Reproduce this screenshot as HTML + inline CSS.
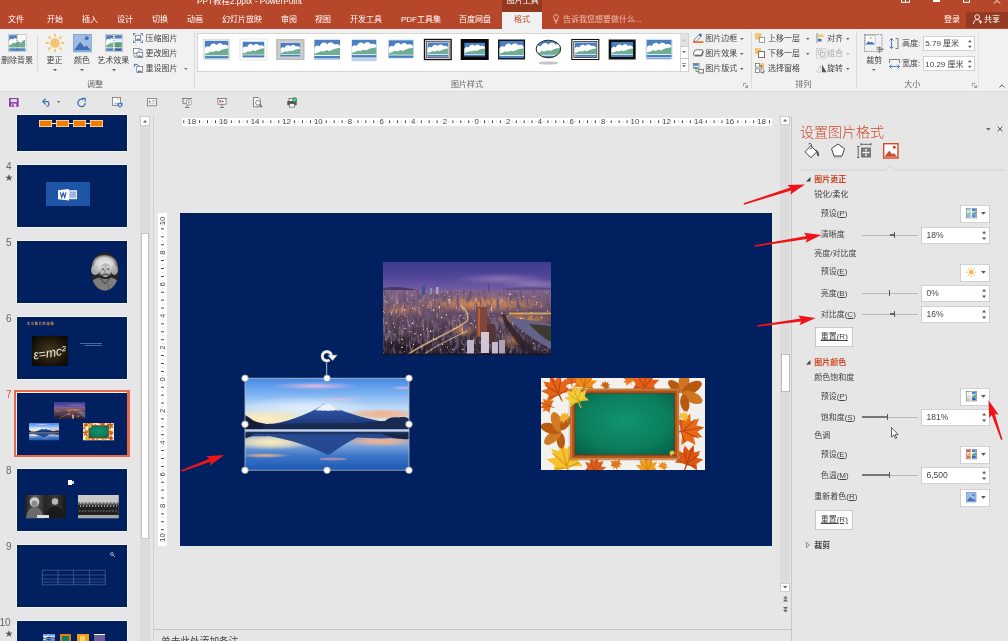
<!DOCTYPE html><html lang="zh-CN"><head><meta charset="utf-8"><title>PPT教程2.pptx - PowerPoint</title><style>
html,body{margin:0;padding:0;}
body{width:1008px;height:641px;overflow:hidden;position:relative;background:#e6e6e6;
 font-family:"Liberation Sans","Noto Sans CJK SC",sans-serif;font-size:8px;color:#444;}
.a{position:absolute;white-space:nowrap;line-height:1;}
.t{position:absolute;white-space:nowrap;line-height:10px;height:10px;font-size:8px;color:#444;}
.w{color:#fff;}
svg{position:absolute;overflow:visible;}
</style></head><body><div id="app" style="position:absolute;left:0;top:0;width:1008px;height:641px;overflow:hidden;will-change:transform;">
<svg width="0" height="0" style="left:0;top:0"><defs>
<symbol id="pic" viewBox="0 0 26 18" preserveAspectRatio="none">
<rect width="26" height="18" fill="#4a7fc1"/>
<path d="M0 15V8c1.500-2.500 4-3 5.500-1.500 1-3.800 5.500-4.800 7.500-1.800 1.500-2.500 5.500-2.500 7 0 2-1 4.500-.5 6 1.500v8.800z" fill="#fff"/>
<path d="M0 15.500v-2.300c2.500-.2 4.500-1 6.500-2.300 1.500.8 3.500.6 5-.4 1.500-.6 2.500-.2 3.500.6 3-2 7-3 11-3.400v8z" fill="#6fae93"/>
<rect y="14.800" width="26" height="1" fill="#fff"/><rect y="15.800" width="26" height="2.200" fill="#4a7fc1"/>
</symbol>
</defs></svg>
<svg width="0" height="0" style="left:0;top:0"><defs><symbol id="city" viewBox="0 0 168 93" preserveAspectRatio="none">
<defs>
<linearGradient id="csky" x1="0" y1="0" x2="0" y2="1"><stop offset="0" stop-color="#3c3c8e"/><stop offset=".5" stop-color="#54489a"/><stop offset="1" stop-color="#7d64a6"/></linearGradient>
<linearGradient id="cgnd" x1="0" y1="0" x2="0" y2="1"><stop offset="0" stop-color="#86668f"/><stop offset=".2" stop-color="#74566f"/><stop offset=".6" stop-color="#4c3a4c"/><stop offset="1" stop-color="#2a1f2a"/></linearGradient>
<radialGradient id="cglow" cx=".5" cy=".5" r=".5"><stop offset="0" stop-color="#f09648" stop-opacity=".85"/><stop offset="1" stop-color="#f09a48" stop-opacity="0"/></radialGradient>
<radialGradient id="chaze" cx=".5" cy=".5" r=".5"><stop offset="0" stop-color="#a283bc" stop-opacity=".7"/><stop offset="1" stop-color="#a283bc" stop-opacity="0"/></radialGradient><radialGradient id="cdark" cx=".5" cy=".5" r=".5"><stop offset="0" stop-color="#1c1520" stop-opacity=".8"/><stop offset="1" stop-color="#1c1520" stop-opacity="0"/></radialGradient>
<filter id="cn1" x="0" y="0" width="1" height="1"><feTurbulence type="fractalNoise" baseFrequency=".38" numOctaves="2" seed="4"/><feColorMatrix values="0 0 0 0 1  0 0 0 0 .74  0 0 0 0 .46  6 0 0 0 -4.050"/></filter>
<filter id="cn2" x="0" y="0" width="1" height="1"><feTurbulence type="fractalNoise" baseFrequency=".3 .1" numOctaves="2" seed="11"/><feColorMatrix values="0 0 0 0 .13  0 0 0 0 .09  0 0 0 0 .17  0 4 0 0 -1.900"/></filter>
<filter id="cn3" x="0" y="0" width="1" height="1"><feTurbulence type="fractalNoise" baseFrequency=".32 .09" numOctaves="2" seed="7"/><feColorMatrix values="0 0 0 0 .7  0 0 0 0 .5  0 0 0 0 .6  0 0 4.500 0 -2.450"/></filter>
<clipPath id="cclip"><rect width="168" height="93"/></clipPath>
</defs>
<g clip-path="url(#cclip)">
<rect width="168" height="32" fill="url(#csky)"/>
<ellipse cx="118" cy="17" rx="48" ry="6" fill="url(#chaze)"/><ellipse cx="150" cy="22" rx="34" ry="5" fill="url(#chaze)"/>
<path d="M0 26c10-2 22-1 34 2v4H0z" fill="#463a6c"/><path d="M120 27c15-2 30-2 48-1v6h-48z" fill="#5f4d88"/>
<rect y="28" width="168" height="65" fill="url(#cgnd)"/>
<ellipse cx="100" cy="42" rx="70" ry="9" fill="url(#cglow)"/><ellipse cx="18" cy="48" rx="26" ry="7" fill="url(#cglow)" opacity=".55"/><ellipse cx="142" cy="57" rx="30" ry="6" fill="url(#cglow)"/>
<ellipse cx="80" cy="68" rx="13" ry="7" fill="url(#cglow)"/><ellipse cx="128" cy="78" rx="12" ry="9" fill="url(#cglow)" opacity=".8"/>
<ellipse cx="22" cy="86" rx="34" ry="12" fill="url(#cdark)"/><ellipse cx="75" cy="88" rx="22" ry="8" fill="url(#cdark)" opacity=".7"/>
<rect y="32" width="120" height="50" filter="url(#cn3)" opacity=".42"/>
<rect y="28" width="168" height="65" filter="url(#cn2)"/>
<rect y="30" width="168" height="63" filter="url(#cn1)"/>
<path d="M125 55c6 8 20 20 43 32V62c-14-2-28-5-43-7z" fill="#65628a"/><path d="M146 62c8 8 14 14 22 18V64z" fill="#3e382f"/>
<path d="M122 52c3 10 18 26 36 41h-12c-12-12-24-26-27-40z" fill="#2a2028" opacity=".8"/>
<path d="M126 50.500h42v2h-42z" fill="#eeb858" opacity=".8"/>
<path d="M24 93c20-14 48-24 60-34 2-4 0-10-6-16" fill="none" stroke="#e6c48c" stroke-width="1.500" opacity=".8"/>
<path d="M40 93c14-10 30-17 44-24" fill="none" stroke="#ffdf9f" stroke-width=".9" opacity=".75"/>
<rect x="93" y="45" width="11" height="30" fill="#84463a"/><rect x="95" y="46" width="2" height="28" fill="#a86048"/><rect x="104" y="62" width="8" height="20" fill="#553434"/>
<rect x="98" y="70" width="8" height="21" fill="#cfc8d4"/><rect x="84" y="78" width="7" height="14" fill="#bdb6c8"/><rect x="109" y="80" width="6" height="13" fill="#c3bccc"/><rect x="116" y="78" width="6" height="14" fill="#a9a2b8"/>
<rect x="39" y="24" width="3" height="9" fill="#3c4f9a"/><rect x="105" y="21" width="1.500" height="9" fill="#5a4a88"/><rect x="47" y="26" width="2" height="6" fill="#8a90c8"/><rect x="53" y="25" width="2.500" height="7" fill="#b0a0c8"/>
<rect y="91.500" width="168" height="1.500" fill="#1a1320"/>
</g></symbol><symbol id="citys" viewBox="0 0 168 93" preserveAspectRatio="none">
<rect width="168" height="32" fill="url(#csky)"/><ellipse cx="118" cy="16" rx="42" ry="4.500" fill="#9a7cb8" opacity=".5"/>
<rect y="28" width="168" height="65" fill="url(#cgnd)"/>
<ellipse cx="105" cy="44" rx="55" ry="9" fill="url(#cglow)"/><ellipse cx="18" cy="48" rx="26" ry="7" fill="url(#cglow)" opacity=".55"/><ellipse cx="142" cy="57" rx="30" ry="7" fill="url(#cglow)"/>
<ellipse cx="80" cy="68" rx="13" ry="7" fill="url(#cglow)"/><ellipse cx="128" cy="78" rx="12" ry="9" fill="url(#cglow)" opacity=".8"/>
<ellipse cx="22" cy="86" rx="34" ry="12" fill="url(#cdark)"/>
<path d="M125 55c6 8 20 20 43 32V62c-14-2-28-5-43-7z" fill="#65628a"/>
<path d="M24 93c20-14 48-24 60-34 2-4 0-10-6-16" fill="none" stroke="#e6c48c" stroke-width="2.500" opacity=".8"/>
<rect x="93" y="45" width="11" height="30" fill="#84463a"/><rect x="98" y="70" width="8" height="21" fill="#cfc8d4"/>
</symbol><symbol id="fuji" viewBox="0 0 164 92" preserveAspectRatio="none">
<defs>
<linearGradient id="fsky" x1="0" y1="0" x2="0" y2="1"><stop offset="0" stop-color="#4587e4"/><stop offset=".3" stop-color="#78b0f2"/><stop offset=".6" stop-color="#bcdaf8"/><stop offset="1" stop-color="#f2e8cc"/></linearGradient>
<linearGradient id="fwat" x1="0" y1="0" x2="0" y2="1"><stop offset="0" stop-color="#c9d8ec"/><stop offset=".1" stop-color="#7a9fd6"/><stop offset=".35" stop-color="#86acdf"/><stop offset=".65" stop-color="#3c76c8"/><stop offset="1" stop-color="#1f58b4"/></linearGradient>
<linearGradient id="fmt" x1="0" y1="0" x2="0" y2="1"><stop offset="0" stop-color="#5b80c6"/><stop offset=".35" stop-color="#2a4f9c"/><stop offset="1" stop-color="#1b3878"/></linearGradient>
<radialGradient id="fcream" cx=".5" cy=".5" r=".5"><stop offset="0" stop-color="#fdeebe" stop-opacity="1"/><stop offset=".5" stop-color="#fbe9b8" stop-opacity=".7"/><stop offset="1" stop-color="#fbe9b8" stop-opacity="0"/></radialGradient>
<radialGradient id="forange" cx=".5" cy=".5" r=".5"><stop offset="0" stop-color="#f6b288" stop-opacity="1"/><stop offset=".5" stop-color="#f2b08e" stop-opacity=".7"/><stop offset="1" stop-color="#f0b090" stop-opacity="0"/></radialGradient>
<radialGradient id="fpink" cx=".5" cy=".5" r=".5"><stop offset="0" stop-color="#efbfe0" stop-opacity=".9"/><stop offset="1" stop-color="#e8b8dc" stop-opacity="0"/></radialGradient>
<radialGradient id="fwhite" cx=".5" cy=".5" r=".5"><stop offset="0" stop-color="#e6f1fc" stop-opacity=".9"/><stop offset="1" stop-color="#e6f1fc" stop-opacity="0"/></radialGradient>
<clipPath id="fclip"><rect width="164" height="92"/></clipPath>
</defs>
<g clip-path="url(#fclip)">
<rect width="164" height="50" fill="url(#fsky)"/>
<ellipse cx="60" cy="30" rx="70" ry="12" fill="url(#fwhite)"/>
<ellipse cx="70" cy="8" rx="44" ry="4" fill="url(#fpink)"/><ellipse cx="95" cy="21" rx="24" ry="2.500" fill="url(#fpink)" opacity=".75"/><ellipse cx="158" cy="10" rx="14" ry="2.500" fill="url(#fpink)" opacity=".75"/>
<ellipse cx="22" cy="41" rx="48" ry="10" fill="url(#fcream)"/>
<ellipse cx="138" cy="36" rx="40" ry="5.500" fill="url(#forange)"/>
<path d="M20 47c20-2 42-10 57-19.500 2-1.800 6-1.800 9 0 18 9 40 14.500 66 18.500l6 2H20z" fill="url(#fmt)"/>
<path d="M70.500 32c3.500-2 6-4.500 8-5.500 1.500-.8 5-.8 7 .2 3 1.500 6 3.500 11 5.800-2.500-.3-4 .5-5.500-.8-1.500 1.500-3 0-4.500 1.200-1.500-1.500-3 1-4.500-.5-1.500.8-3-.3-4.500.5-1.500-1-3.500.3-7-.9z" fill="#eef3fb"/>
<path d="M77 27c1-1.200 2-1.200 3-.6" stroke="#8fa6c8" stroke-width=".7" fill="none"/>
<path d="M0 37c4 2 8 6.500 14 7.500l10 2v5H0z" fill="#121d3a"/>
<path d="M18 46.500c6-1.500 12-.5 20-1 10 .5 20-1 30 0 12-1 26 0 38-.5 10 .5 22-2 34-2 3-3.500 8-4.500 14-3.500 4-1 8 0 10 1v12H18z" fill="#192b50"/>
<rect y="51.500" width="164" height="40.500" fill="url(#fwat)"/>
<ellipse cx="26" cy="64" rx="44" ry="8" fill="url(#fcream)"/>
<ellipse cx="20" cy="77.500" rx="26" ry="2.500" fill="url(#forange)" opacity=".85"/>
<ellipse cx="136" cy="63" rx="38" ry="5.500" fill="url(#forange)"/>
<path d="M0 54h164v3c-6 3-12 4-18 3-10 1-22 0-34-.5-8 4-18 10-26 16-2 1.500-4 1.500-6 0C64 68 44 61.500 24 58 14 58.500 6 58 0 59.500z" fill="#21448c" opacity=".95"/>
<path d="M0 53.500h164v2.500H0z" fill="#1c3260"/><path d="M136 55.500h28v5.500c-9 1-18-1.500-28-5.500z" fill="#162748"/><path d="M0 55.500h10c-3 2-6 4-10 5z" fill="#162748"/>
<rect y="51.500" width="164" height="2" fill="#c3d3ea" opacity=".95"/>
<ellipse cx="88" cy="81" rx="14" ry="1.500" fill="#e89ab0" opacity=".6"/>
</g></symbol><symbol id="board" viewBox="0 0 164 92" preserveAspectRatio="none">
<defs><radialGradient id="bg1" cx=".5" cy=".45" r=".75"><stop offset="0" stop-color="#109470"/><stop offset=".6" stop-color="#0b7d5d"/><stop offset="1" stop-color="#065a43"/></radialGradient>
<clipPath id="bclip"><rect width="164" height="92"/></clipPath></defs>
<rect width="164" height="92" fill="#f2f1ed"/>
<g clip-path="url(#bclip)"><g transform="translate(15 10) rotate(-25) scale(1.5)"><path d="M0,-10L2,-5 6,-7.500 5,-2 10,-2.500 6.500,2 8.500,6.500 3,5 .5,5 .3,10-.3,10-.5,5-3,5-8.500,6.500-6.500,2-10,-2.500-5,-2-6,-7.500-2,-5Z" fill="#e4641a"/><path d="M0,9V-8M0,4L6,-5M0,4L-6,-5M0,5L7,4M0,5L-7,4" stroke="#a83a08" stroke-width=".7" fill="none" opacity=".7"/></g><g transform="translate(6 27) rotate(-70) scale(0.8)"><path d="M0,-10L2,-5 6,-7.500 5,-2 10,-2.500 6.500,2 8.500,6.500 3,5 .5,5 .3,10-.3,10-.5,5-3,5-8.500,6.500-6.500,2-10,-2.500-5,-2-6,-7.500-2,-5Z" fill="#e8701c"/><path d="M0,9V-8M0,4L6,-5M0,4L-6,-5M0,5L7,4M0,5L-7,4" stroke="#a83a08" stroke-width=".7" fill="none" opacity=".7"/></g><g transform="translate(44 3.5) rotate(10) scale(1.2)"><path d="M0,-10L2,-5 6,-7.500 5,-2 10,-2.500 6.500,2 8.500,6.500 3,5 .5,5 .3,10-.3,10-.5,5-3,5-8.500,6.500-6.500,2-10,-2.500-5,-2-6,-7.500-2,-5Z" fill="#ee8c1c"/><path d="M0,9V-8M0,4L6,-5M0,4L-6,-5M0,5L7,4M0,5L-7,4" stroke="#c05a0a" stroke-width=".7" fill="none" opacity=".7"/></g><g transform="translate(30 2) rotate(-10) scale(0.7)"><path d="M0,-10L2,-5 6,-7.500 5,-2 10,-2.500 6.500,2 8.500,6.500 3,5 .5,5 .3,10-.3,10-.5,5-3,5-8.500,6.500-6.500,2-10,-2.500-5,-2-6,-7.500-2,-5Z" fill="#e86a18"/><path d="M0,9V-8M0,4L6,-5M0,4L-6,-5M0,5L7,4M0,5L-7,4" stroke="#a83a08" stroke-width=".7" fill="none" opacity=".7"/></g><g transform="translate(64.5 7.5) rotate(40) scale(0.5)"><path d="M0,-10L2,-5 6,-7.500 5,-2 10,-2.500 6.500,2 8.500,6.500 3,5 .5,5 .3,10-.3,10-.5,5-3,5-8.500,6.500-6.500,2-10,-2.500-5,-2-6,-7.500-2,-5Z" fill="#c96616"/></g><g transform="translate(104 4) rotate(5) scale(1.4)"><path d="M0,-10L2,-5 6,-7.500 5,-2 10,-2.500 6.500,2 8.500,6.500 3,5 .5,5 .3,10-.3,10-.5,5-3,5-8.500,6.500-6.500,2-10,-2.500-5,-2-6,-7.500-2,-5Z" fill="#e55f17"/><path d="M0,9V-8M0,4L6,-5M0,4L-6,-5M0,5L7,4M0,5L-7,4" stroke="#a83a08" stroke-width=".7" fill="none" opacity=".7"/></g><g transform="translate(88 2) rotate(-30) scale(0.6)"><path d="M0,-10L2,-5 6,-7.500 5,-2 10,-2.500 6.500,2 8.500,6.500 3,5 .5,5 .3,10-.3,10-.5,5-3,5-8.500,6.500-6.500,2-10,-2.500-5,-2-6,-7.500-2,-5Z" fill="#ea7a1a"/></g><g transform="translate(142 15) rotate(60) scale(1.7)"><ellipse cx="0" cy="-6" rx="2.6" ry="5" fill="#b9590f" transform="rotate(-110)"/><ellipse cx="0" cy="-6" rx="3.2" ry="6.5" fill="#cf7420" transform="rotate(-55)"/><ellipse cx="0" cy="-6" rx="3.2" ry="6.5" fill="#b9590f" transform="rotate(0)"/><ellipse cx="0" cy="-6" rx="3.2" ry="6.5" fill="#cf7420" transform="rotate(55)"/><ellipse cx="0" cy="-6" rx="2.6" ry="5" fill="#b9590f" transform="rotate(110)"/></g><g transform="translate(148 52) rotate(80) scale(1.6)"><path d="M0,-10L2,-5 6,-7.500 5,-2 10,-2.500 6.500,2 8.500,6.500 3,5 .5,5 .3,10-.3,10-.5,5-3,5-8.500,6.500-6.500,2-10,-2.500-5,-2-6,-7.500-2,-5Z" fill="#e8681a"/><path d="M0,9V-8M0,4L6,-5M0,4L-6,-5M0,5L7,4M0,5L-7,4" stroke="#a83a08" stroke-width=".7" fill="none" opacity=".7"/></g><g transform="translate(143 38.5) rotate(30) scale(0.55)"><path d="M0,-10L2,-5 6,-7.500 5,-2 10,-2.500 6.500,2 8.500,6.500 3,5 .5,5 .3,10-.3,10-.5,5-3,5-8.500,6.500-6.500,2-10,-2.500-5,-2-6,-7.500-2,-5Z" fill="#f2c03a"/></g><g transform="translate(148 80) rotate(20) scale(1.4)"><path d="M0,-10L2,-5 6,-7.500 5,-2 10,-2.500 6.500,2 8.500,6.500 3,5 .5,5 .3,10-.3,10-.5,5-3,5-8.500,6.500-6.500,2-10,-2.500-5,-2-6,-7.500-2,-5Z" fill="#df5612"/><path d="M0,9V-8M0,4L6,-5M0,4L-6,-5M0,5L7,4M0,5L-7,4" stroke="#9a3206" stroke-width=".7" fill="none" opacity=".7"/></g><g transform="translate(106 88) rotate(-10) scale(1.1)"><path d="M0,-10L2,-5 6,-7.500 5,-2 10,-2.500 6.500,2 8.500,6.500 3,5 .5,5 .3,10-.3,10-.5,5-3,5-8.500,6.500-6.500,2-10,-2.500-5,-2-6,-7.500-2,-5Z" fill="#f0a020"/><path d="M0,9V-8M0,4L6,-5M0,4L-6,-5M0,5L7,4M0,5L-7,4" stroke="#c06a0a" stroke-width=".7" fill="none" opacity=".7"/></g><g transform="translate(75 86) rotate(170) scale(0.6)"><path d="M0,-10L2,-5 6,-7.500 5,-2 10,-2.500 6.500,2 8.500,6.500 3,5 .5,5 .3,10-.3,10-.5,5-3,5-8.500,6.500-6.500,2-10,-2.500-5,-2-6,-7.500-2,-5Z" fill="#e07818"/></g><g transform="translate(54 89) rotate(15) scale(1.1)"><path d="M0,-10L2,-5 6,-7.500 5,-2 10,-2.500 6.500,2 8.500,6.500 3,5 .5,5 .3,10-.3,10-.5,5-3,5-8.500,6.500-6.500,2-10,-2.500-5,-2-6,-7.500-2,-5Z" fill="#e0601a"/><path d="M0,9V-8M0,4L6,-5M0,4L-6,-5M0,5L7,4M0,5L-7,4" stroke="#a83a08" stroke-width=".7" fill="none" opacity=".7"/></g><g transform="translate(24 81) rotate(-15) scale(1.8)"><path d="M0,-10L2,-5 6,-7.500 5,-2 10,-2.500 6.500,2 8.500,6.500 3,5 .5,5 .3,10-.3,10-.5,5-3,5-8.500,6.500-6.500,2-10,-2.500-5,-2-6,-7.500-2,-5Z" fill="#f6c22e"/><path d="M0,9V-8M0,4L6,-5M0,4L-6,-5M0,5L7,4M0,5L-7,4" stroke="#d08a10" stroke-width=".7" fill="none" opacity=".7"/></g><g transform="translate(19 53) rotate(-75) scale(1.6)"><ellipse cx="0" cy="-6" rx="2.6" ry="5" fill="#b85c14" transform="rotate(-110)"/><ellipse cx="0" cy="-6" rx="3.2" ry="6.5" fill="#d07a24" transform="rotate(-55)"/><ellipse cx="0" cy="-6" rx="3.2" ry="6.5" fill="#b85c14" transform="rotate(0)"/><ellipse cx="0" cy="-6" rx="3.2" ry="6.5" fill="#d07a24" transform="rotate(55)"/><ellipse cx="0" cy="-6" rx="2.6" ry="5" fill="#b85c14" transform="rotate(110)"/></g><g transform="translate(23.5 39.5) rotate(-40) scale(0.6)"><path d="M0,-10L2,-5 6,-7.500 5,-2 10,-2.500 6.500,2 8.500,6.500 3,5 .5,5 .3,10-.3,10-.5,5-3,5-8.500,6.500-6.500,2-10,-2.500-5,-2-6,-7.500-2,-5Z" fill="#f0b030"/></g><g transform="translate(122 88) rotate(30) scale(0.5)"><path d="M0,-10L2,-5 6,-7.500 5,-2 10,-2.500 6.500,2 8.500,6.500 3,5 .5,5 .3,10-.3,10-.5,5-3,5-8.500,6.500-6.500,2-10,-2.500-5,-2-6,-7.500-2,-5Z" fill="#e8901c"/></g>
<rect x="27.500" y="10" width="112" height="73" fill="#8a8a80" opacity=".25"/>
<rect x="29.200" y="10.800" width="108.800" height="70.700" fill="#b4531a"/>
<rect x="30.200" y="11.800" width="106.800" height="68.700" fill="none" stroke="#d9853f" stroke-width="1.200"/>
<rect x="33.400" y="14.800" width="100.600" height="62.700" fill="#7a3408"/>
<rect x="34.200" y="15.500" width="99" height="61.200" fill="url(#bg1)"/>
<g transform="translate(35.5 18.5) rotate(-20) scale(1.2)"><path d="M0,-10L2,-5 6,-7.500 5,-2 10,-2.500 6.500,2 8.500,6.500 3,5 .5,5 .3,10-.3,10-.5,5-3,5-8.500,6.500-6.500,2-10,-2.500-5,-2-6,-7.500-2,-5Z" fill="#f5cc38"/><path d="M0,9V-8M0,4L6,-5M0,4L-6,-5M0,5L7,4M0,5L-7,4" stroke="#c89a10" stroke-width=".7" fill="none" opacity=".7"/></g>
<path d="M38 22l3 8" stroke="#a8861a" stroke-width=".7"/>
<g transform="translate(131 75) rotate(-30) scale(0.325)"><path d="M0,-10L2,-5 6,-7.500 5,-2 10,-2.500 6.500,2 8.500,6.500 3,5 .5,5 .3,10-.3,10-.5,5-3,5-8.500,6.500-6.500,2-10,-2.500-5,-2-6,-7.500-2,-5Z" fill="#f2c23a"/></g>
</g></symbol></defs></svg>
<div class="a" style="left:0px;top:0px;width:1008px;height:29px;background:#b7472a;"></div>
<div class="a" style="left:502.4px;top:0px;width:39.6px;height:12px;background:#92391f;"></div>
<div class="a" style="left:502.4px;top:11.5px;width:39.6px;height:17.5px;background:#f1f1f1;"></div>
<div class="t" style="left:197px;top:-4.2px;color:#fff;font-size:8.3px;">PPT教程2.pptx - PowerPoint</div>
<div class="t" style="left:506.8px;top:-4.2px;color:#fff;">图片工具</div>
<div class="t" style="left:8px;top:14.8px;color:#fff;">文件</div>
<div class="t" style="left:47px;top:14.8px;color:#fff;">开始</div>
<div class="t" style="left:82px;top:14.8px;color:#fff;">插入</div>
<div class="t" style="left:117px;top:14.8px;color:#fff;">设计</div>
<div class="t" style="left:152px;top:14.8px;color:#fff;">切换</div>
<div class="t" style="left:187px;top:14.8px;color:#fff;">动画</div>
<div class="t" style="left:222px;top:14.8px;color:#fff;">幻灯片放映</div>
<div class="t" style="left:281px;top:14.8px;color:#fff;">审阅</div>
<div class="t" style="left:315px;top:14.8px;color:#fff;">视图</div>
<div class="t" style="left:350px;top:14.8px;color:#fff;">开发工具</div>
<div class="t" style="left:401px;top:14.8px;color:#fff;">PDF工具集</div>
<div class="t" style="left:459px;top:14.8px;color:#fff;">百度网盘</div>
<div class="t" style="left:514px;top:14.8px;color:#b7472a;">格式</div>
<svg style="left:553px;top:14px;" width="6" height="10" viewBox="0 0 6 10"><path d="M3 .6a2.4 2.4 0 0 1 1.3 4.4v1.6H1.7V5A2.4 2.4 0 0 1 3 .6zM1.9 7.8h2.2M2.2 9h1.6" fill="none" stroke="#f3c9bd" stroke-width=".8"/></svg>
<div class="t" style="left:563px;top:14.8px;color:#f0c0b2;">告诉我您想要做什么...</div>
<div class="t" style="left:944px;top:14.8px;color:#fff;">登录</div>
<div class="a" style="left:966px;top:11.5px;width:42px;height:16.5px;background:#943a22;"></div>
<svg style="left:973px;top:14px;" width="10" height="11" viewBox="0 0 10 11"><circle cx="4.2" cy="3" r="2.3" fill="none" stroke="#fff" stroke-width=".9"/><path d="M.5 10c0-3 1.6-4.3 3.7-4.3S7 6.5 7.4 8M7.6 6.3v3.4M5.9 8h3.4" fill="none" stroke="#fff" stroke-width=".9"/></svg>
<div class="t" style="left:984px;top:14.8px;color:#fff;">共享</div>
<svg style="left:901px;top:0px;" width="10" height="4" viewBox="0 0 10 4"><rect x=".5" y="-3" width="8" height="5.300" fill="none" stroke="#fff" stroke-width="1"/><path d="M4.500 0v2" stroke="#fff" stroke-width="1"/></svg>
<div class="a" style="left:933px;top:0px;width:6.5px;height:1.6px;background:#fff;"></div>
<svg style="left:963px;top:0px;" width="8" height="4" viewBox="0 0 8 4"><rect x=".5" y="-4" width="6" height="6.300" fill="none" stroke="#fff" stroke-width="1"/></svg>
<svg style="left:994px;top:0px;" width="8" height="4" viewBox="0 0 8 4"><path d="M0 3.5L3 .5 6 3.5" fill="none" stroke="#fff" stroke-width="1"/></svg>
<div class="a" style="left:0px;top:29px;width:1008px;height:62px;background:#f1f1f1;"></div>
<div class="a" style="left:0px;top:90.5px;width:1008px;height:0.8px;background:#dcdcdc;"></div>
<svg style="left:7.5px;top:34px;" width="18.5" height="18" viewBox="0 0 18.5 18"><rect x=".4" y=".4" width="17.7" height="17.2" fill="#fff" stroke="#bdbdbd" stroke-width=".8"/>
<rect x="1.2" y="1.2" width="7.6" height="6" fill="#4a7fc1"/><path d="M1.2 7.2c1-3 3-3 3.6-1.5C5.6 3.6 8 3.8 8.8 5.5v3.7H1.2z" fill="#fff"/>
<path d="M1.2 13.5V11c2 0 3-1 4-2.4 1 .8 2 .8 3.600-.6 2-1 3 0 4 1 1.500-2 3-3 4.200-3.200V13.500z" fill="#6fae93"/>
<rect x="1.2" y="14.300" width="16" height="2.500" fill="#4a7fc1"/>
<path d="M9.200 0v18" stroke="#555" stroke-width=".7" stroke-dasharray="1 1"/></svg>
<div class="t" style="left:1px;top:55.8px;">删除背景</div>
<div class="a" style="left:37px;top:35px;width:0.8px;height:36px;background:#dadada;"></div>
<svg style="left:44.6px;top:33px;" width="20" height="20" viewBox="0 0 20 20"><g transform="translate(10 10)"><circle r="4.800" fill="#f2c572"/><rect x="-1" y="-9.200" width="2" height="3" fill="#f2c572" transform="rotate(0)"/><rect x="-1" y="-9.200" width="2" height="3" fill="#f2c572" transform="rotate(45)"/><rect x="-1" y="-9.200" width="2" height="3" fill="#f2c572" transform="rotate(90)"/><rect x="-1" y="-9.200" width="2" height="3" fill="#f2c572" transform="rotate(135)"/><rect x="-1" y="-9.200" width="2" height="3" fill="#f2c572" transform="rotate(180)"/><rect x="-1" y="-9.200" width="2" height="3" fill="#f2c572" transform="rotate(225)"/><rect x="-1" y="-9.200" width="2" height="3" fill="#f2c572" transform="rotate(270)"/><rect x="-1" y="-9.200" width="2" height="3" fill="#f2c572" transform="rotate(315)"/></g></svg>
<div class="t" style="left:46.5px;top:55.8px;">更正</div>
<svg style="left:52.6px;top:68.7px;" width="4" height="2.2" viewBox="0 0 4 2.2"><polygon points="0,0 4,0 2.0,2.2" fill="#666"/></svg>
<svg style="left:73px;top:34px;" width="18.7" height="18.2" viewBox="0 0 18.7 18.2"><rect width="18.700" height="18.200" fill="#9dbbe3"/><rect x=".4" y=".4" width="17.900" height="17.400" fill="none" stroke="#7ea4d8" stroke-width=".8"/>
<circle cx="13.800" cy="4.200" r="1.900" fill="#3f6fb0"/><path d="M1 16.200l6.200-8.200 4.300 5.300 1.900-2 4.300 4.900z" fill="#3f6fb0"/></svg>
<div class="t" style="left:74px;top:55.8px;">颜色</div>
<svg style="left:80.0px;top:68.7px;" width="4" height="2.2" viewBox="0 0 4 2.2"><polygon points="0,0 4,0 2.0,2.2" fill="#666"/></svg>
<svg style="left:104.6px;top:34px;" width="18" height="18" viewBox="0 0 18 18"><rect x=".4" y=".4" width="17.200" height="17.200" fill="#fff" stroke="#bdbdbd" stroke-width=".8"/>
<rect x="1.200" y="1.200" width="7" height="6" fill="#4a7fc1"/><path d="M1.200 7.200c1-3 3-3 3.600-1.500C5.600 3.600 7.500 3.800 8.200 5.500v3.700H1.200z" fill="#fff"/>
<path d="M1.200 13.500V11c2 0 3-1 4-2.400 1 .8 2 .8 3-.3V13.500z" fill="#6fae93"/><rect x="1.200" y="14.300" width="7" height="2.500" fill="#4a7fc1"/>
<rect x="9.800" y="1.200" width="7" height="3.500" fill="#4a7fc1"/><rect x="9.800" y="4.700" width="7" height="2.500" fill="#dfe9f5"/>
<rect x="9.800" y="8.200" width="7" height="5.300" fill="#5b9c7d"/><rect x="9.800" y="14.300" width="7" height="2.500" fill="#2f5f9f"/>
<path d="M9 0v18" stroke="#555" stroke-width=".7" stroke-dasharray="1 1"/></svg>
<div class="t" style="left:97.2px;top:55.8px;">艺术效果</div>
<svg style="left:111.5px;top:68.7px;" width="4" height="2.2" viewBox="0 0 4 2.2"><polygon points="0,0 4,0 2.0,2.2" fill="#666"/></svg>
<svg style="left:133.3px;top:33px;" width="10" height="10" viewBox="0 0 10 10"><path d="M.5 2.500V.5h2M7.500.5h2v2M9.500 7.500v2h-2M2.500 9.500h-2v-2" fill="none" stroke="#3f6fb0" stroke-width=".9"/><rect x="2.300" y="2.300" width="5.400" height="5.400" fill="#fff" stroke="#666" stroke-width=".7"/><path d="M2.800 7.200l1.600-2 1.100 1.100.8-.8 1.200 1.700z" fill="#4a7fc1"/></svg>
<div class="t" style="left:145.4px;top:33.8px;">压缩图片</div>
<svg style="left:133.3px;top:48.2px;" width="10" height="10" viewBox="0 0 10 10"><rect x=".5" y=".5" width="5.500" height="5" fill="#fff" stroke="#666" stroke-width=".7"/><rect x="4" y="4.500" width="5.700" height="5" fill="#fff" stroke="#666" stroke-width=".7"/><path d="M4.500 9l1.600-2 1.100 1.100.8-.8 1.200 1.700z" fill="#4a7fc1"/><path d="M7 1c1.500 0 2.300.8 2.300 2.300M1 7c0 1.500.8 2.300 2.300 2.300" fill="none" stroke="#3f6fb0" stroke-width=".9"/></svg>
<div class="t" style="left:145.4px;top:49.0px;">更改图片</div>
<svg style="left:133.3px;top:63.3px;" width="10" height="10" viewBox="0 0 10 10"><path d="M3.800 1.500H1.300V4M1.300 1.500C3.500 1 5 1.500 6 3" fill="none" stroke="#3f6fb0" stroke-width=".9"/><rect x="3.800" y="3.500" width="5.900" height="6" fill="#fff" stroke="#666" stroke-width=".7"/><path d="M4.300 9l1.600-2 1.100 1.100.8-.8 1.200 1.700z" fill="#4a7fc1"/></svg>
<div class="t" style="left:145.4px;top:64.1px;">重设图片</div>
<svg style="left:183.7px;top:67.5px;" width="3.6" height="2" viewBox="0 0 3.6 2"><polygon points="0,0 3.6,0 1.8,2" fill="#777"/></svg>
<div class="t" style="left:87px;top:79.8px;color:#666;">调整</div>
<div class="a" style="left:193.5px;top:31px;width:0.8px;height:57px;background:#dadada;"></div>
<div class="a" style="left:197px;top:33px;width:491px;height:39px;background:#fff;box-shadow:inset 0 0 0 .8px #c8c8c8"></div>
<svg style="left:0;top:0" width="1008" height="92" viewBox="0 0 1008 92"><rect x="203.6" y="39.5" width="26" height="20" fill="#fff" stroke="#cfcfcf" stroke-width=".7"/><use href="#pic" x="204.6" y="40.5" width="24" height="18" /><rect x="239.97" y="39.0" width="27" height="21" fill="#fff" stroke="#d6d6d6" stroke-width=".7"/><use href="#pic" x="242.47" y="41.5" width="22" height="16" /><rect x="276.14" y="39.0" width="28.400" height="21" fill="#bdbdbd"/><rect x="277.84" y="40.5" width="25" height="18" fill="#cdcdcd"/><use href="#pic" x="280.34" y="43.0" width="20" height="13.5" /><use href="#pic" x="314.21" y="39.5" width="26" height="19" /><rect x="314.21" y="58.5" width="26" height="1.200" fill="#9db9dd"/><use href="#pic" x="351.58" y="39.5" width="25" height="18" /><rect x="351.58" y="57.7" width="25" height="3.500" fill="#4a7fc1" opacity=".35"/><rect x="387.95" y="39.5" width="26" height="19" fill="#4a7fc1" opacity=".3"/><use href="#pic" x="388.75" y="40.2" width="24.4" height="17.6" /><rect x="424.5199999999999" y="39.5" width="26.600" height="20" fill="#fff" stroke="#111" stroke-width="1.400"/><rect x="426.5199999999999" y="41.5" width="22.600" height="16" fill="none" stroke="#111" stroke-width=".6"/><use href="#pic" x="427.31999999999994" y="42.3" width="21" height="14.4" /><rect x="460.68999999999994" y="39.0" width="28" height="21" fill="#0a0a0a"/><use href="#pic" x="464.18999999999994" y="42.5" width="21" height="14" /><rect x="498.05999999999995" y="39.5" width="27" height="20" fill="#111"/><use href="#pic" x="499.25999999999993" y="40.7" width="24.6" height="17.6" /><ellipse cx="548.43" cy="63.0" rx="10" ry="1.600" fill="#c4c4c4"/><clipPath id="ov"><ellipse cx="548.43" cy="49.0" rx="12" ry="8.500"/></clipPath><g clip-path="url(#ov)"><use href="#pic" x="535.43" y="40.0" width="26" height="18" /></g><ellipse cx="548.43" cy="49.0" rx="12.300" ry="8.800" fill="none" stroke="#111" stroke-width=".9"/><rect x="571.8" y="39.5" width="27" height="20" fill="#fff" stroke="#111" stroke-width="1.100"/><rect x="573.8" y="41.5" width="23" height="16" fill="none" stroke="#111" stroke-width=".7"/><use href="#pic" x="574.5999999999999" y="42.3" width="21.4" height="14.4" /><rect x="608.67" y="39.5" width="27" height="20" fill="#111"/><use href="#pic" x="611.17" y="42.0" width="22" height="15" /><rect x="645.54" y="39.0" width="27" height="20" fill="#4a7fc1" opacity=".25"/><use href="#pic" x="646.54" y="40.0" width="25" height="17" /><rect x="646.54" y="57.5" width="25" height="2" fill="#4a7fc1" opacity=".5"/></svg>
<div class="a" style="left:679.5px;top:33px;width:9px;height:39px;background:#fff;box-shadow:inset 0 0 0 .8px #c8c8c8"></div>
<div class="a" style="left:680.3px;top:33.8px;width:7.4px;height:12px;background:#e2e2e2;"></div>
<div class="a" style="left:679.5px;top:45.5px;width:8.5px;height:0.8px;background:#c8c8c8;"></div>
<div class="a" style="left:679.5px;top:58.4px;width:8.5px;height:0.8px;background:#c8c8c8;"></div>
<svg style="left:682px;top:38.5px;" width="4" height="2.2" viewBox="0 0 4 2.2"><polygon points="0,2.200 4,2.200 2,0" fill="#c0c0c0"/></svg>
<svg style="left:682.0px;top:50.9px;" width="4" height="2.2" viewBox="0 0 4 2.2"><polygon points="0,0 4,0 2.0,2.2" fill="#777"/></svg>
<svg style="left:682px;top:62.5px;" width="4" height="5" viewBox="0 0 4 5"><rect width="4" height=".8" fill="#777"/><polygon points="0,2 4,2 2,4.400" fill="#777"/></svg>
<div class="t" style="left:451px;top:79.8px;color:#666;">图片样式</div>
<svg style="left:692.5px;top:33px;" width="10.5" height="10" viewBox="0 0 10.5 10"><path d="M1.300 6.800l4.800-5.200 1.900 1.700-4.800 5.200-2.400.6z" fill="#fff" stroke="#555" stroke-width=".7"/><path d="M5.600 2.100l1.700-1.800 1.900 1.700-1.700 1.800z" fill="#2f6fbf"/><path d="M1.300 6.800l.5 1.700 1.400.1" fill="none" stroke="#2f6fbf" stroke-width=".6"/><rect x="0" y="8.200" width="10.500" height="1.800" fill="#e8762d"/></svg>
<svg style="left:692.5px;top:48px;" width="11" height="10" viewBox="0 0 11 10"><path d="M3.500 3.200h6.800c.5 0 .7.400.5.900l-1.300 3.600c-.2.500-.7.800-1.200.800H1.500z" fill="#777"/><path d="M3 1.800h6.300c.6 0 .9.400.7 1l-1.200 3.300c-.2.600-.8 1-1.400 1H1.100c-.6 0-.9-.4-.7-1l1.200-3.300c.2-.6.800-1 1.400-1z" fill="#fff" stroke="#555" stroke-width=".8"/></svg>
<svg style="left:692.5px;top:63px;" width="11" height="10.5" viewBox="0 0 11 10.5"><rect x=".4" y=".4" width="5.600" height="5" fill="#fff" stroke="#666" stroke-width=".7"/><rect x="1" y="1" width="4.400" height="1.800" fill="#4a86c8"/><path d="M1 5l1.400-1.800 1 1 .8-.8 1.200 1.600z" fill="#5b9c7d"/><path d="M3 5.600v2.800h2.600" fill="none" stroke="#3c9a6c" stroke-width=".9"/><rect x="5.800" y="6.400" width="4.600" height="3.600" fill="#fff" stroke="#555" stroke-width=".8"/></svg>
<div class="t" style="left:705.3px;top:34.1px;">图片边框</div>
<svg style="left:739.7px;top:37.599999999999994px;" width="3.6" height="2" viewBox="0 0 3.6 2"><polygon points="0,0 3.6,0 1.8,2" fill="#666"/></svg>
<div class="t" style="left:705.3px;top:49.0px;">图片效果</div>
<svg style="left:739.7px;top:52.5px;" width="3.6" height="2" viewBox="0 0 3.6 2"><polygon points="0,0 3.6,0 1.8,2" fill="#666"/></svg>
<div class="t" style="left:705.3px;top:64.1px;">图片版式</div>
<svg style="left:739.7px;top:67.6px;" width="3.6" height="2" viewBox="0 0 3.6 2"><polygon points="0,0 3.6,0 1.8,2" fill="#666"/></svg>
<svg style="left:743px;top:83px;" width="5" height="5" viewBox="0 0 5 5"><path d="M.4 .4h3M.4 .4v3M4.600 2v2.600H2M2 2l2.400 2.400" fill="none" stroke="#777" stroke-width=".7"/></svg>
<div class="a" style="left:750.5px;top:31px;width:0.8px;height:57px;background:#dadada;"></div>
<svg style="left:755.3px;top:33px;" width="10" height="10" viewBox="0 0 10 10"><rect x="0" y="0" width="6.500" height="6.500" fill="#f2c572"/><rect x="4.300" y="4.300" width="5.200" height="5.200" fill="#fff" stroke="#777" stroke-width=".7"/></svg>
<svg style="left:755.3px;top:48px;" width="10" height="10" viewBox="0 0 10 10"><rect x="0" y="0" width="6" height="6" fill="#f2c572"/><rect x="3.600" y="3.600" width="6" height="6" fill="#fff" stroke="#555" stroke-width=".8"/></svg>
<svg style="left:755.3px;top:63px;" width="10" height="10" viewBox="0 0 10 10"><rect x="5.200" y=".2" width="4" height="4" fill="#f2c572"/><rect x=".4" y=".4" width="4" height="3.600" fill="#fff" stroke="#666" stroke-width=".7"/><rect x=".4" y="5.800" width="4" height="3.600" fill="#fff" stroke="#666" stroke-width=".7"/><path d="M6 2l3.300 6.500-1.400.2.700 1.500-.8.300-.7-1.500-1.100.9z" fill="#fff" stroke="#444" stroke-width=".6"/></svg>
<div class="t" style="left:768px;top:34.1px;">上移一层</div>
<svg style="left:806.2px;top:37.6px;" width="3.6" height="2" viewBox="0 0 3.6 2"><polygon points="0,0 3.6,0 1.8,2" fill="#666"/></svg>
<div class="t" style="left:768px;top:49.0px;">下移一层</div>
<svg style="left:806.2px;top:52.5px;" width="3.6" height="2" viewBox="0 0 3.6 2"><polygon points="0,0 3.6,0 1.8,2" fill="#666"/></svg>
<div class="t" style="left:768px;top:64.1px;">选择窗格</div>
<svg style="left:816px;top:33px;" width="9" height="10" viewBox="0 0 9 10"><path d="M1 0v10" stroke="#777" stroke-width=".8"/><rect x="2" y="1.500" width="5.500" height="2.600" fill="#f2c572"/><rect x="2" y="5.800" width="3.500" height="2.600" fill="#3f6fb0"/></svg>
<div class="t" style="left:827px;top:34.1px;">对齐</div>
<svg style="left:846.2px;top:37.6px;" width="3.6" height="2" viewBox="0 0 3.6 2"><polygon points="0,0 3.6,0 1.8,2" fill="#666"/></svg>
<svg style="left:815.5px;top:48px;" width="10" height="10" viewBox="0 0 10 10"><rect x=".5" y=".5" width="9.500" height="9.500" fill="none" stroke="#b5b5b5" stroke-width=".8" stroke-dasharray="1.400 .9"/><rect x="2.200" y="2.200" width="4" height="4" fill="none" stroke="#b5b5b5" stroke-width=".8"/><rect x="4.500" y="4.500" width="3.800" height="3.800" fill="#f1f1f1" stroke="#b5b5b5" stroke-width=".8"/></svg>
<div class="t" style="left:827px;top:49.0px;color:#aaa;">组合</div>
<svg style="left:846.2px;top:52.5px;" width="3.6" height="2" viewBox="0 0 3.6 2"><polygon points="0,0 3.6,0 1.8,2" fill="#bbb"/></svg>
<svg style="left:815.5px;top:63.5px;" width="11" height="9" viewBox="0 0 11 9"><path d="M4.600 1.500L.8 8h3.800z" fill="#fff" stroke="#aaa" stroke-width=".6"/><path d="M6 .5L10.500 8.300H6z" fill="#555"/></svg>
<div class="t" style="left:827px;top:64.1px;">旋转</div>
<svg style="left:846.2px;top:67.6px;" width="3.6" height="2" viewBox="0 0 3.6 2"><polygon points="0,0 3.6,0 1.8,2" fill="#666"/></svg>
<div class="t" style="left:795.3px;top:79.8px;color:#666;">排列</div>
<div class="a" style="left:856px;top:31px;width:0.8px;height:57px;background:#dadada;"></div>
<svg style="left:863.7px;top:34px;" width="20" height="19" viewBox="0 0 20 19"><rect x=".5" y=".5" width="17.500" height="17" fill="none" stroke="#666" stroke-width=".7" stroke-dasharray="1.600 1"/>
<rect x="1.600" y="1.600" width="9.500" height="9" fill="#fff" stroke="#8aaad8" stroke-width=".6"/><path d="M2 10.200l2.600-3.300 1.900 1.900 1.300-1.300 2.800 2.700z" fill="#3f6fb0"/><circle cx="6.500" cy="4" r="1" fill="#f0a848"/>
<path d="M15.300 12.500v6.500M12.500 15.300h7.500" stroke="#777" stroke-width="1.100"/><path d="M12.500 13.600h4.600v4.600" fill="none" stroke="#777" stroke-width=".8"/></svg>
<div class="t" style="left:866.3px;top:55.8px;">裁剪</div>
<svg style="left:872.2px;top:69.0px;" width="3.6" height="2" viewBox="0 0 3.6 2"><polygon points="0,0 3.6,0 1.8,2" fill="#666"/></svg>
<svg style="left:888.7px;top:38px;" width="10" height="11" viewBox="0 0 10 11"><path d="M2.500 .5v10M.5 2.500l2-2 2 2M.5 8.500l2 2 2-2" fill="none" stroke="#3f6fb0" stroke-width=".9"/><path d="M6.500 .5h2.500v10h-2.500" fill="none" stroke="#666" stroke-width=".8"/></svg>
<svg style="left:888.5px;top:58.5px;" width="11" height="10" viewBox="0 0 11 10"><path d="M.5 7.500h10M2.500 5.500l-2 2 2 2M8.500 5.500l2 2-2 2" fill="none" stroke="#3f6fb0" stroke-width=".9"/><path d="M.5 4V.5h10V4" fill="none" stroke="#666" stroke-width=".8"/></svg>
<div class="t" style="left:902px;top:39.3px;">高度:</div>
<div class="t" style="left:902px;top:59.3px;">宽度:</div>
<div class="a" style="left:923px;top:36px;width:52px;height:15px;background:#fff;box-shadow:inset 0 0 0 .8px #c6c6c6"></div>
<div class="t" style="left:925.3px;top:39.4px;">5.79 厘米</div>
<svg style="left:968px;top:39.5px;" width="4" height="8" viewBox="0 0 4 8"><polygon points="0,2.200 3.600,2.200 1.800,0" fill="#555"/><polygon points="0,5.800 3.600,5.800 1.800,8" fill="#555"/></svg>
<div class="a" style="left:923px;top:56.4px;width:52px;height:15px;background:#fff;box-shadow:inset 0 0 0 .8px #c6c6c6"></div>
<div class="t" style="left:925.3px;top:59.8px;">10.29 厘米</div>
<svg style="left:968px;top:59.9px;" width="4" height="8" viewBox="0 0 4 8"><polygon points="0,2.200 3.600,2.200 1.800,0" fill="#555"/><polygon points="0,5.800 3.600,5.800 1.800,8" fill="#555"/></svg>
<div class="t" style="left:904.3px;top:79.8px;color:#666;">大小</div>
<svg style="left:971.5px;top:83px;" width="5" height="5" viewBox="0 0 5 5"><path d="M.4 .4h3M.4 .4v3M4.600 2v2.600H2M2 2l2.400 2.400" fill="none" stroke="#777" stroke-width=".7"/></svg>
<div class="a" style="left:978px;top:31px;width:0.8px;height:57px;background:#e2e2e2;"></div>
<svg style="left:998.5px;top:83.5px;" width="6" height="4" viewBox="0 0 6 4"><path d="M.5 3.500l2.500-2.700 2.500 2.700" fill="none" stroke="#555" stroke-width=".9"/></svg>
<svg style="left:8.7px;top:97.9px;" width="9.6" height="8.8" viewBox="0 0 9.6 8.8"><path d="M0 0h9.600v8.800H0z" fill="#8a3fa6"/><rect x="1.700" y="1.100" width="6.200" height="3" fill="#ead9f0"/><rect x="2.300" y="5.600" width="5" height="3.200" fill="#ead9f0"/><rect x="3" y="6.300" width="1.700" height="2.500" fill="#8a3fa6"/></svg>
<svg style="left:41.6px;top:98px;" width="10" height="8.6" viewBox="0 0 10 8.6"><path d="M3.800 .6L.8 3.600l3 3M1 3.600h4.800a3 3 0 0 1 0 4.600H4.500" fill="none" stroke="#3f74b8" stroke-width="1.300"/></svg>
<svg style="left:57.0px;top:101.0px;" width="3.4" height="2" viewBox="0 0 3.4 2"><polygon points="0,0 3.4,0 1.7,2" fill="#666"/></svg>
<svg style="left:77.3px;top:97.5px;" width="9.5" height="9.5" viewBox="0 0 9.5 9.5"><path d="M6.300 1.600A3.700 3.700 0 1 0 8.300 5" fill="none" stroke="#3f74b8" stroke-width="1.300"/><path d="M4.800 .3h3.400v3.400" fill="none" stroke="#3f74b8" stroke-width="1.200"/></svg>
<svg style="left:112.2px;top:97.1px;" width="11" height="10.5" viewBox="0 0 11 10.5"><rect x=".4" y=".4" width="8" height="8" fill="#fff" stroke="#777" stroke-width=".8"/><rect x="5.200" y="1.600" width="1.600" height="1.300" fill="#f0b35a"/><path d="M1.300 7.600l2-3 1.400 1.600.8-.8 1.600 2.200z" fill="#b9cbe6"/><rect x="5.500" y="5.700" width="5" height="3.800" rx=".8" fill="#3f74b8"/><path d="M6.300 8.500l1.700-2 1.700 2z" fill="#fff"/><rect x="7" y="9.500" width="2" height=".9" fill="#3f74b8"/></svg>
<svg style="left:147.3px;top:98.3px;" width="10" height="8.2" viewBox="0 0 10 8.2"><rect x=".4" y=".4" width="9.200" height="7.400" fill="#fff" stroke="#777" stroke-width=".8"/><path d="M1.500 4.200l1.300-2.200 1.300 2.200z" fill="#3f74b8"/><path d="M5 2.300h3.500M5 3.800h3.500M1.500 5.800h7" stroke="#999" stroke-width=".6"/></svg>
<svg style="left:182.2px;top:97.6px;" width="11" height="10" viewBox="0 0 11 10"><path d="M0 .5h10M1 .5v5.200h3.500M5 7.200v2M3 9.500h4.500" fill="none" stroke="#666" stroke-width=".8"/><circle cx="7" cy="4.500" r="2.700" fill="#fff" stroke="#777" stroke-width=".7"/><path d="M6.200 3.200l2 1.300-2 1.300z" fill="#3c9a6c"/></svg>
<svg style="left:217px;top:97.6px;" width="10" height="10" viewBox="0 0 10 10"><path d="M0 .5h10M1 .5v5.700h8V.5M5 6.200v3M3 9.500h4" fill="none" stroke="#666" stroke-width=".8"/><rect x="1.600" y="1.200" width="6.800" height="4.400" fill="#fff"/><rect x="2.300" y="2" width="1.800" height="2.600" fill="#e8622d"/><path d="M4.800 2l2.300 1.400-2.300 1.400z" fill="#3f74b8"/></svg>
<svg style="left:252.9px;top:97.3px;" width="9.5" height="10.5" viewBox="0 0 9.5 10.5"><path d="M.5 .5h4.800l2 2v7.300H.5z" fill="#fff" stroke="#666" stroke-width=".8"/><circle cx="5" cy="5.800" r="2.400" fill="#fff" stroke="#666" stroke-width=".8"/><path d="M6.800 7.700l2.300 2.400" stroke="#555" stroke-width="1.100"/></svg>
<svg style="left:287px;top:97px;" width="10.5" height="10.5" viewBox="0 0 10.5 10.5"><rect x="2" y="1.500" width="5.500" height="3" fill="#fff" stroke="#555" stroke-width=".7"/><rect x=".3" y="4" width="9.400" height="4.300" rx=".6" fill="#555"/><rect x="2.300" y="6.800" width="5.200" height="3.300" fill="#fff" stroke="#555" stroke-width=".7"/><circle cx="7.600" cy="2.700" r="2.500" fill="#3c9a6c"/><path d="M6.400 2.700l.9 1 1.600-1.800" fill="none" stroke="#fff" stroke-width=".7"/></svg>
<div class="a" style="left:16px;top:113.5px;width:111.5px;height:38.5px;background:#f3f3f3;"></div>
<div class="a" style="left:17px;top:114.5px;width:109.5px;height:36.5px;background:#002060;"></div>
<div class="a" style="left:16px;top:164px;width:111.5px;height:63.5px;background:#f3f3f3;"></div>
<div class="a" style="left:17px;top:165px;width:109.5px;height:61.5px;background:#002060;"></div>
<div class="a" style="left:16px;top:240px;width:111.5px;height:63.5px;background:#f3f3f3;"></div>
<div class="a" style="left:17px;top:241px;width:109.5px;height:61.5px;background:#002060;"></div>
<div class="a" style="left:16px;top:316px;width:111.5px;height:63.5px;background:#f3f3f3;"></div>
<div class="a" style="left:17px;top:317px;width:109.5px;height:61.5px;background:#002060;"></div>
<div class="a" style="left:16px;top:392px;width:111.5px;height:63.5px;background:#f3f3f3;"></div>
<div class="a" style="left:17px;top:393px;width:109.5px;height:61.5px;background:#002060;"></div>
<div class="a" style="left:16px;top:468px;width:111.5px;height:63.5px;background:#f3f3f3;"></div>
<div class="a" style="left:17px;top:469px;width:109.5px;height:61.5px;background:#002060;"></div>
<div class="a" style="left:16px;top:544px;width:111.5px;height:63.5px;background:#f3f3f3;"></div>
<div class="a" style="left:17px;top:545px;width:109.5px;height:61.5px;background:#002060;"></div>
<div class="a" style="left:16px;top:620px;width:111.5px;height:63.5px;background:#f3f3f3;"></div>
<div class="a" style="left:17px;top:621px;width:109.5px;height:61.5px;background:#002060;"></div>
<div class="a" style="left:14px;top:390px;width:115.5px;height:67px;background:#e8694a;"></div>
<div class="a" style="left:16.3px;top:392.3px;width:111px;height:62.3px;background:#eee;"></div>
<div class="a" style="left:17px;top:393px;width:109.5px;height:61.5px;background:#002060;"></div>
<div class="t" style="left:5.9px;top:161.70000000000002px;font-size:10px;color:#666">4</div>
<div class="t" style="left:5.9px;top:237.70000000000002px;font-size:10px;color:#666">5</div>
<div class="t" style="left:5.9px;top:313.7px;font-size:10px;color:#666">6</div>
<div class="t" style="left:5.9px;top:389.7px;font-size:10px;color:#d9532c">7</div>
<div class="t" style="left:5.9px;top:465.7px;font-size:10px;color:#666">8</div>
<div class="t" style="left:5.9px;top:541.6999999999999px;font-size:10px;color:#666">9</div>
<div class="t" style="left:-0.5px;top:617.6999999999999px;font-size:10px;color:#666">10</div>
<div class="t" style="left:5px;top:173.200px;font-size:8px;color:#555">★</div>
<div class="t" style="left:5px;top:629px;font-size:8px;color:#555">★</div>
<div class="a" style="left:38.7px;top:119.5px;width:13px;height:7.2px;background:#ee7d00;box-shadow:inset 0 0 0 .7px #ffe3bd"></div>
<div class="a" style="left:51.7px;top:122.7px;width:4.3px;height:0.8px;background:#fff;"></div>
<div class="a" style="left:56px;top:119.5px;width:13px;height:7.2px;background:#ee7d00;box-shadow:inset 0 0 0 .7px #ffe3bd"></div>
<div class="a" style="left:69px;top:122.7px;width:4.3px;height:0.8px;background:#fff;"></div>
<div class="a" style="left:73px;top:119.5px;width:13px;height:7.2px;background:#ee7d00;box-shadow:inset 0 0 0 .7px #ffe3bd"></div>
<div class="a" style="left:86px;top:122.7px;width:4.3px;height:0.8px;background:#fff;"></div>
<div class="a" style="left:90px;top:119.5px;width:13px;height:7.2px;background:#ee7d00;box-shadow:inset 0 0 0 .7px #ffe3bd"></div>
<div class="a" style="left:46px;top:182px;width:43.5px;height:24px;background:#1e55a7;"></div>
<svg style="left:58px;top:188.7px;" width="20" height="11.5" viewBox="0 0 20 11.5"><rect x="9" y="1.200" width="10" height="9" fill="#e9eef7"/><rect x="11.500" y="2.500" width="6.500" height="6.300" fill="#9db5dc"/><path d="M0 1.200L11 0v11.500L0 10.300z" fill="#fff"/><path d="M2.300 3.300l1.400 5 1.500-4.300 1.500 4.300 1.400-5" fill="none" stroke="#1e55a7" stroke-width="1.100"/></svg>
<svg style="left:91px;top:252.2px;" width="27.7" height="38.8" viewBox="0 0 27.7 38.8"><defs><clipPath id="einc"><ellipse cx="13.850" cy="19.400" rx="13.850" ry="19.400"/></clipPath><radialGradient id="einh" cx=".5" cy=".45" r=".55"><stop offset="0" stop-color="#f2f2f2"/><stop offset=".6" stop-color="#cfcfcf"/><stop offset="1" stop-color="#8a8a8a" stop-opacity=".2"/></radialGradient></defs><g clip-path="url(#einc)"><rect width="27.700" height="38.800" fill="#262626"/><ellipse cx="13.500" cy="13.500" rx="13.500" ry="10.500" fill="url(#einh)"/><ellipse cx="4" cy="18" rx="4" ry="5" fill="#c4c4c4" opacity=".8"/><ellipse cx="23.500" cy="18" rx="3.500" ry="5" fill="#bdbdbd" opacity=".8"/><ellipse cx="14.500" cy="18" rx="5.300" ry="7" fill="#b9b9b9"/><path d="M10.500 15.500c1-.8 2.200-.8 3 0M15.800 15.500c1-.8 2.200-.8 3 0" stroke="#e8e8e8" stroke-width=".9" fill="none"/><circle cx="12" cy="17.200" r=".8" fill="#333"/><circle cx="17.300" cy="17.200" r=".8" fill="#333"/><path d="M11 22.500c2-1.200 5-1.200 7.500 0l.5 1.500c-3-1-6-1-8.500 0z" fill="#555"/><path d="M14 17.500v3.500" stroke="#8a8a8a" stroke-width="1.200"/><path d="M0 39V30c3-3 6-4 9-4.500 3 2 8 2 11 0 3 1 6 2 8 5V39z" fill="#7d7d7d"/><path d="M9 26l5 6 5-6" fill="none" stroke="#3a3a3a" stroke-width="1"/><path d="M17 32l1 7" stroke="#555" stroke-width=".8"/></g></svg>
<div class="t" style="left:27px;top:320.500px;font-size:3px;line-height:6px;height:6px;color:#f29b5c;font-weight:bold;letter-spacing:.9px">北京图片的组图</div>
<svg style="left:32px;top:335.7px;" width="36" height="30" viewBox="0 0 36 30"><defs><radialGradient id="emc" cx=".5" cy=".5" r=".7"><stop offset="0" stop-color="#4a3a22"/><stop offset=".6" stop-color="#1e170c"/><stop offset="1" stop-color="#050402"/></radialGradient></defs><rect width="36" height="30" rx="1" fill="url(#emc)"/><text x="1" y="21" font-size="12.500" font-family="Liberation Sans,sans-serif" font-style="italic" fill="#f3ecd8" transform="rotate(-9 18 16)" textLength="33" lengthAdjust="spacingAndGlyphs">ε=mc²</text></svg>
<div class="a" style="left:79.5px;top:342.7px;width:22.5px;height:0.5px;background:#4f66a0;"></div>
<div class="a" style="left:85px;top:345.2px;width:17px;height:0.5px;background:#4f66a0;"></div>
<svg style="left:54.2px;top:402px;" width="31.4" height="17" viewBox="0 0 31.4 17"><use href="#citys" width="31.400" height="17"/></svg>
<svg style="left:29px;top:423px;" width="30" height="17.5" viewBox="0 0 30 17.5"><use href="#fuji" width="30" height="17.500"/></svg>
<svg style="left:83px;top:423px;" width="31" height="17.5" viewBox="0 0 31 17.5"><use href="#board" width="31" height="17.500"/></svg>
<div class="a" style="left:67.7px;top:479.8px;width:4.5px;height:5px;background:#fff;"></div>
<div class="a" style="left:72.2px;top:481px;width:1.8px;height:2.6px;background:#c8cede;"></div>
<svg style="left:24.8px;top:494.7px;" width="40.7" height="23.2" viewBox="0 0 40.7 23.2"><defs><linearGradient id="bw1" x1="0" x2="1"><stop offset="0" stop-color="#1f1f1f"/><stop offset=".25" stop-color="#5d5d5d"/><stop offset=".5" stop-color="#242424"/><stop offset=".75" stop-color="#3c3c3c"/><stop offset="1" stop-color="#161616"/></linearGradient></defs><rect width="40.700" height="23.200" fill="url(#bw1)"/><circle cx="9.500" cy="7" r="4.800" fill="#cfcfcf"/><circle cx="9.500" cy="8.500" r="3" fill="#8a8a8a"/><circle cx="30" cy="6.500" r="3.200" fill="#b9b9b9"/><path d="M1 23.200c1-9 5-11 9-11s7 3 9 11z" fill="#6b6b6b"/><path d="M21 23.200c1-9 4-12 9-12s8 4 9 12z" fill="#1a1a1a"/><path d="M12 20h12v3H12z" fill="#ddd"/></svg>
<svg style="left:77.9px;top:494.7px;" width="40.6" height="23.2" viewBox="0 0 40.6 23.2"><rect width="40.600" height="23.200" fill="#8f8f8f"/><rect width="40.600" height="8" fill="#c9c9c9"/><path d="M0 8h40.600" stroke="#666" stroke-width="1.500" stroke-dasharray="2 1.500"/><rect y="9.500" width="40.600" height="10.500" fill="#222"/><path d="M2 11h37" stroke="#bbb" stroke-width="1.600" stroke-dasharray="1.300 1.700"/><path d="M1 16h39" stroke="#555" stroke-width="2" stroke-dasharray="1.500 1.500"/><rect y="20" width="40.600" height="3.200" fill="#a5a5a5"/></svg>
<svg style="left:41.5px;top:569.5px;" width="63.5" height="15" viewBox="0 0 63.5 15"><path d="M0 0.25h63.500" stroke="#7587b4" stroke-width=".45"/><path d="M0 5h63.500" stroke="#7587b4" stroke-width=".45"/><path d="M0 9h63.500" stroke="#7587b4" stroke-width=".45"/><path d="M0 12h63.500" stroke="#7587b4" stroke-width=".45"/><path d="M0 14.75h63.500" stroke="#7587b4" stroke-width=".45"/><path d="M0.25 0v15" stroke="#7587b4" stroke-width=".45"/><path d="M16 0v15" stroke="#7587b4" stroke-width=".45"/><path d="M31.5 0v15" stroke="#7587b4" stroke-width=".45"/><path d="M47.5 0v15" stroke="#7587b4" stroke-width=".45"/><path d="M63.25 0v15" stroke="#7587b4" stroke-width=".45"/></svg>
<svg style="left:110px;top:551.5px;" width="5" height="5" viewBox="0 0 5 5"><circle cx="1.900" cy="1.900" r="1.400" fill="none" stroke="#dfe5f2" stroke-width=".7"/><path d="M3 3l1.700 1.700" stroke="#dfe5f2" stroke-width=".8"/></svg>
<svg style="left:42.9px;top:634.4px;" width="12" height="7" viewBox="0 0 12 7"><use href="#fuji" width="12" height="8"/></svg>
<div class="a" style="left:60px;top:634.4px;width:11.4px;height:7px;background:#e27a1f;"></div>
<div class="a" style="left:62px;top:636px;width:7.4px;height:5px;background:#0d7f5f;"></div>
<div class="a" style="left:76.8px;top:634.4px;width:12px;height:7px;background:#f0a020;"></div>
<div class="a" style="left:80px;top:635.5px;width:5px;height:5.5px;background:#f7d25a;"></div>
<div class="a" style="left:94px;top:634.4px;width:11.3px;height:7px;background:#6b5fa0;"></div>
<div class="a" style="left:94px;top:634.4px;width:11.3px;height:0.7px;background:#fff;"></div>
<div class="a" style="left:140.3px;top:115.9px;width:9.5px;height:525.1px;background:#dcdcdc;"></div>
<div class="a" style="left:140.3px;top:115.9px;width:9.5px;height:9.7px;background:#fff;box-shadow:inset 0 0 0 .8px #c0c0c0"></div>
<svg style="left:143px;top:119.5px;" width="4.2" height="2.5" viewBox="0 0 4.2 2.5"><polygon points="0,2.500 4.200,2.500 2.100,0" fill="#666"/></svg>
<div class="a" style="left:140.8px;top:233px;width:8.7px;height:306px;background:#fff;box-shadow:inset 0 0 0 .8px #b5b5b5"></div>
<div class="a" style="left:153px;top:115px;width:0.9px;height:526px;background:#cfcfcf;"></div>
<div class="a" style="left:182px;top:118px;width:590px;height:8px;background:#fff;"></div>
<svg style="left:0;top:0" width="1008" height="130" viewBox="0 0 1008 130" font-family="Liberation Sans,sans-serif"><rect x="183.34" y="120.300" width=".9" height="2.800" fill="#333"/><text x="191.66" y="123.900" font-size="7.800" text-anchor="middle" fill="#444">18</text><rect x="199.18" y="120.300" width=".9" height="2.800" fill="#333"/><rect x="207.09" y="120.300" width=".9" height="2.800" fill="#333"/><rect x="215.01" y="120.300" width=".9" height="2.800" fill="#333"/><text x="223.32" y="123.900" font-size="7.800" text-anchor="middle" fill="#444">16</text><rect x="230.84" y="120.300" width=".9" height="2.800" fill="#333"/><rect x="238.75" y="120.300" width=".9" height="2.800" fill="#333"/><rect x="246.67" y="120.300" width=".9" height="2.800" fill="#333"/><text x="254.98" y="123.900" font-size="7.800" text-anchor="middle" fill="#444">14</text><rect x="262.5" y="120.300" width=".9" height="2.800" fill="#333"/><rect x="270.41" y="120.300" width=".9" height="2.800" fill="#333"/><rect x="278.33" y="120.300" width=".9" height="2.800" fill="#333"/><text x="286.64" y="123.900" font-size="7.800" text-anchor="middle" fill="#444">12</text><rect x="294.16" y="120.300" width=".9" height="2.800" fill="#333"/><rect x="302.07" y="120.300" width=".9" height="2.800" fill="#333"/><rect x="309.99" y="120.300" width=".9" height="2.800" fill="#333"/><text x="318.3" y="123.900" font-size="7.800" text-anchor="middle" fill="#444">10</text><rect x="325.82" y="120.300" width=".9" height="2.800" fill="#333"/><rect x="333.73" y="120.300" width=".9" height="2.800" fill="#333"/><rect x="341.65" y="120.300" width=".9" height="2.800" fill="#333"/><text x="349.96" y="123.900" font-size="7.800" text-anchor="middle" fill="#444">8</text><rect x="357.48" y="120.300" width=".9" height="2.800" fill="#333"/><rect x="365.39" y="120.300" width=".9" height="2.800" fill="#333"/><rect x="373.31" y="120.300" width=".9" height="2.800" fill="#333"/><text x="381.62" y="123.900" font-size="7.800" text-anchor="middle" fill="#444">6</text><rect x="389.14" y="120.300" width=".9" height="2.800" fill="#333"/><rect x="397.05" y="120.300" width=".9" height="2.800" fill="#333"/><rect x="404.97" y="120.300" width=".9" height="2.800" fill="#333"/><text x="413.28" y="123.900" font-size="7.800" text-anchor="middle" fill="#444">4</text><rect x="420.8" y="120.300" width=".9" height="2.800" fill="#333"/><rect x="428.71" y="120.300" width=".9" height="2.800" fill="#333"/><rect x="436.63" y="120.300" width=".9" height="2.800" fill="#333"/><text x="444.94" y="123.900" font-size="7.800" text-anchor="middle" fill="#444">2</text><rect x="452.46" y="120.300" width=".9" height="2.800" fill="#333"/><rect x="460.37" y="120.300" width=".9" height="2.800" fill="#333"/><rect x="468.29" y="120.300" width=".9" height="2.800" fill="#333"/><text x="476.6" y="123.900" font-size="7.800" text-anchor="middle" fill="#444">0</text><rect x="484.12" y="120.300" width=".9" height="2.800" fill="#333"/><rect x="492.03" y="120.300" width=".9" height="2.800" fill="#333"/><rect x="499.95" y="120.300" width=".9" height="2.800" fill="#333"/><text x="508.26" y="123.900" font-size="7.800" text-anchor="middle" fill="#444">2</text><rect x="515.78" y="120.300" width=".9" height="2.800" fill="#333"/><rect x="523.69" y="120.300" width=".9" height="2.800" fill="#333"/><rect x="531.61" y="120.300" width=".9" height="2.800" fill="#333"/><text x="539.92" y="123.900" font-size="7.800" text-anchor="middle" fill="#444">4</text><rect x="547.44" y="120.300" width=".9" height="2.800" fill="#333"/><rect x="555.35" y="120.300" width=".9" height="2.800" fill="#333"/><rect x="563.26" y="120.300" width=".9" height="2.800" fill="#333"/><text x="571.58" y="123.900" font-size="7.800" text-anchor="middle" fill="#444">6</text><rect x="579.1" y="120.300" width=".9" height="2.800" fill="#333"/><rect x="587.01" y="120.300" width=".9" height="2.800" fill="#333"/><rect x="594.93" y="120.300" width=".9" height="2.800" fill="#333"/><text x="603.24" y="123.900" font-size="7.800" text-anchor="middle" fill="#444">8</text><rect x="610.75" y="120.300" width=".9" height="2.800" fill="#333"/><rect x="618.67" y="120.300" width=".9" height="2.800" fill="#333"/><rect x="626.59" y="120.300" width=".9" height="2.800" fill="#333"/><text x="634.9" y="123.900" font-size="7.800" text-anchor="middle" fill="#444">10</text><rect x="642.42" y="120.300" width=".9" height="2.800" fill="#333"/><rect x="650.33" y="120.300" width=".9" height="2.800" fill="#333"/><rect x="658.25" y="120.300" width=".9" height="2.800" fill="#333"/><text x="666.56" y="123.900" font-size="7.800" text-anchor="middle" fill="#444">12</text><rect x="674.08" y="120.300" width=".9" height="2.800" fill="#333"/><rect x="681.99" y="120.300" width=".9" height="2.800" fill="#333"/><rect x="689.91" y="120.300" width=".9" height="2.800" fill="#333"/><text x="698.22" y="123.900" font-size="7.800" text-anchor="middle" fill="#444">14</text><rect x="705.74" y="120.300" width=".9" height="2.800" fill="#333"/><rect x="713.65" y="120.300" width=".9" height="2.800" fill="#333"/><rect x="721.57" y="120.300" width=".9" height="2.800" fill="#333"/><text x="729.88" y="123.900" font-size="7.800" text-anchor="middle" fill="#444">16</text><rect x="737.4" y="120.300" width=".9" height="2.800" fill="#333"/><rect x="745.31" y="120.300" width=".9" height="2.800" fill="#333"/><rect x="753.23" y="120.300" width=".9" height="2.800" fill="#333"/><text x="761.54" y="123.900" font-size="7.800" text-anchor="middle" fill="#444">18</text><rect x="769.06" y="120.300" width=".9" height="2.800" fill="#333"/><rect x="187.35" y="121.300" width=".7" height=".8" fill="#888"/><rect x="195.27" y="121.300" width=".7" height=".8" fill="#888"/><rect x="203.18" y="121.300" width=".7" height=".8" fill="#888"/><rect x="211.1" y="121.300" width=".7" height=".8" fill="#888"/><rect x="219.01" y="121.300" width=".7" height=".8" fill="#888"/><rect x="226.93" y="121.300" width=".7" height=".8" fill="#888"/><rect x="234.84" y="121.300" width=".7" height=".8" fill="#888"/><rect x="242.76" y="121.300" width=".7" height=".8" fill="#888"/><rect x="250.67" y="121.300" width=".7" height=".8" fill="#888"/><rect x="258.59" y="121.300" width=".7" height=".8" fill="#888"/><rect x="266.5" y="121.300" width=".7" height=".8" fill="#888"/><rect x="274.42" y="121.300" width=".7" height=".8" fill="#888"/><rect x="282.33" y="121.300" width=".7" height=".8" fill="#888"/><rect x="290.25" y="121.300" width=".7" height=".8" fill="#888"/><rect x="298.16" y="121.300" width=".7" height=".8" fill="#888"/><rect x="306.08" y="121.300" width=".7" height=".8" fill="#888"/><rect x="313.99" y="121.300" width=".7" height=".8" fill="#888"/><rect x="321.91" y="121.300" width=".7" height=".8" fill="#888"/><rect x="329.82" y="121.300" width=".7" height=".8" fill="#888"/><rect x="337.74" y="121.300" width=".7" height=".8" fill="#888"/><rect x="345.65" y="121.300" width=".7" height=".8" fill="#888"/><rect x="353.57" y="121.300" width=".7" height=".8" fill="#888"/><rect x="361.48" y="121.300" width=".7" height=".8" fill="#888"/><rect x="369.4" y="121.300" width=".7" height=".8" fill="#888"/><rect x="377.31" y="121.300" width=".7" height=".8" fill="#888"/><rect x="385.23" y="121.300" width=".7" height=".8" fill="#888"/><rect x="393.14" y="121.300" width=".7" height=".8" fill="#888"/><rect x="401.06" y="121.300" width=".7" height=".8" fill="#888"/><rect x="408.97" y="121.300" width=".7" height=".8" fill="#888"/><rect x="416.89" y="121.300" width=".7" height=".8" fill="#888"/><rect x="424.8" y="121.300" width=".7" height=".8" fill="#888"/><rect x="432.72" y="121.300" width=".7" height=".8" fill="#888"/><rect x="440.63" y="121.300" width=".7" height=".8" fill="#888"/><rect x="448.55" y="121.300" width=".7" height=".8" fill="#888"/><rect x="456.46" y="121.300" width=".7" height=".8" fill="#888"/><rect x="464.38" y="121.300" width=".7" height=".8" fill="#888"/><rect x="472.29" y="121.300" width=".7" height=".8" fill="#888"/><rect x="480.21" y="121.300" width=".7" height=".8" fill="#888"/><rect x="488.12" y="121.300" width=".7" height=".8" fill="#888"/><rect x="496.04" y="121.300" width=".7" height=".8" fill="#888"/><rect x="503.95" y="121.300" width=".7" height=".8" fill="#888"/><rect x="511.87" y="121.300" width=".7" height=".8" fill="#888"/><rect x="519.78" y="121.300" width=".7" height=".8" fill="#888"/><rect x="527.7" y="121.300" width=".7" height=".8" fill="#888"/><rect x="535.61" y="121.300" width=".7" height=".8" fill="#888"/><rect x="543.53" y="121.300" width=".7" height=".8" fill="#888"/><rect x="551.44" y="121.300" width=".7" height=".8" fill="#888"/><rect x="559.36" y="121.300" width=".7" height=".8" fill="#888"/><rect x="567.27" y="121.300" width=".7" height=".8" fill="#888"/><rect x="575.19" y="121.300" width=".7" height=".8" fill="#888"/><rect x="583.1" y="121.300" width=".7" height=".8" fill="#888"/><rect x="591.02" y="121.300" width=".7" height=".8" fill="#888"/><rect x="598.93" y="121.300" width=".7" height=".8" fill="#888"/><rect x="606.85" y="121.300" width=".7" height=".8" fill="#888"/><rect x="614.76" y="121.300" width=".7" height=".8" fill="#888"/><rect x="622.68" y="121.300" width=".7" height=".8" fill="#888"/><rect x="630.59" y="121.300" width=".7" height=".8" fill="#888"/><rect x="638.51" y="121.300" width=".7" height=".8" fill="#888"/><rect x="646.42" y="121.300" width=".7" height=".8" fill="#888"/><rect x="654.34" y="121.300" width=".7" height=".8" fill="#888"/><rect x="662.25" y="121.300" width=".7" height=".8" fill="#888"/><rect x="670.17" y="121.300" width=".7" height=".8" fill="#888"/><rect x="678.08" y="121.300" width=".7" height=".8" fill="#888"/><rect x="686.0" y="121.300" width=".7" height=".8" fill="#888"/><rect x="693.91" y="121.300" width=".7" height=".8" fill="#888"/><rect x="701.83" y="121.300" width=".7" height=".8" fill="#888"/><rect x="709.74" y="121.300" width=".7" height=".8" fill="#888"/><rect x="717.66" y="121.300" width=".7" height=".8" fill="#888"/><rect x="725.57" y="121.300" width=".7" height=".8" fill="#888"/><rect x="733.49" y="121.300" width=".7" height=".8" fill="#888"/><rect x="741.4" y="121.300" width=".7" height=".8" fill="#888"/><rect x="749.32" y="121.300" width=".7" height=".8" fill="#888"/><rect x="757.23" y="121.300" width=".7" height=".8" fill="#888"/><rect x="765.15" y="121.300" width=".7" height=".8" fill="#888"/></svg>
<div class="a" style="left:158px;top:213px;width:9px;height:332.5px;background:#fff;"></div>
<svg style="left:0;top:0" width="170" height="560" viewBox="0 0 170 560" font-family="Liberation Sans,sans-serif"><text x="0" y="0" font-size="7.800" text-anchor="middle" fill="#444" transform="translate(164.700 220.95) rotate(-90)">10</text><rect x="161" y="228.47" width="2.900" height=".9" fill="#333"/><rect x="161" y="236.38" width="2.900" height=".9" fill="#333"/><rect x="161" y="244.29" width="2.900" height=".9" fill="#333"/><text x="0" y="0" font-size="7.800" text-anchor="middle" fill="#444" transform="translate(164.700 252.61) rotate(-90)">8</text><rect x="161" y="260.12" width="2.900" height=".9" fill="#333"/><rect x="161" y="268.04" width="2.900" height=".9" fill="#333"/><rect x="161" y="275.96" width="2.900" height=".9" fill="#333"/><text x="0" y="0" font-size="7.800" text-anchor="middle" fill="#444" transform="translate(164.700 284.27) rotate(-90)">6</text><rect x="161" y="291.79" width="2.900" height=".9" fill="#333"/><rect x="161" y="299.7" width="2.900" height=".9" fill="#333"/><rect x="161" y="307.62" width="2.900" height=".9" fill="#333"/><text x="0" y="0" font-size="7.800" text-anchor="middle" fill="#444" transform="translate(164.700 315.93) rotate(-90)">4</text><rect x="161" y="323.45" width="2.900" height=".9" fill="#333"/><rect x="161" y="331.36" width="2.900" height=".9" fill="#333"/><rect x="161" y="339.28" width="2.900" height=".9" fill="#333"/><text x="0" y="0" font-size="7.800" text-anchor="middle" fill="#444" transform="translate(164.700 347.59) rotate(-90)">2</text><rect x="161" y="355.11" width="2.900" height=".9" fill="#333"/><rect x="161" y="363.02" width="2.900" height=".9" fill="#333"/><rect x="161" y="370.94" width="2.900" height=".9" fill="#333"/><text x="0" y="0" font-size="7.800" text-anchor="middle" fill="#444" transform="translate(164.700 379.25) rotate(-90)">0</text><rect x="161" y="386.77" width="2.900" height=".9" fill="#333"/><rect x="161" y="394.68" width="2.900" height=".9" fill="#333"/><rect x="161" y="402.6" width="2.900" height=".9" fill="#333"/><text x="0" y="0" font-size="7.800" text-anchor="middle" fill="#444" transform="translate(164.700 410.91) rotate(-90)">2</text><rect x="161" y="418.43" width="2.900" height=".9" fill="#333"/><rect x="161" y="426.34" width="2.900" height=".9" fill="#333"/><rect x="161" y="434.25" width="2.900" height=".9" fill="#333"/><text x="0" y="0" font-size="7.800" text-anchor="middle" fill="#444" transform="translate(164.700 442.57) rotate(-90)">4</text><rect x="161" y="450.09" width="2.900" height=".9" fill="#333"/><rect x="161" y="458.0" width="2.900" height=".9" fill="#333"/><rect x="161" y="465.92" width="2.900" height=".9" fill="#333"/><text x="0" y="0" font-size="7.800" text-anchor="middle" fill="#444" transform="translate(164.700 474.23) rotate(-90)">6</text><rect x="161" y="481.75" width="2.900" height=".9" fill="#333"/><rect x="161" y="489.66" width="2.900" height=".9" fill="#333"/><rect x="161" y="497.58" width="2.900" height=".9" fill="#333"/><text x="0" y="0" font-size="7.800" text-anchor="middle" fill="#444" transform="translate(164.700 505.89) rotate(-90)">8</text><rect x="161" y="513.41" width="2.900" height=".9" fill="#333"/><rect x="161" y="521.32" width="2.900" height=".9" fill="#333"/><rect x="161" y="529.24" width="2.900" height=".9" fill="#333"/><text x="0" y="0" font-size="7.800" text-anchor="middle" fill="#444" transform="translate(164.700 537.55) rotate(-90)">10</text><rect x="161.900" y="216.64" width=".8" height=".7" fill="#888"/><rect x="161.900" y="224.56" width=".8" height=".7" fill="#888"/><rect x="161.900" y="232.47" width=".8" height=".7" fill="#888"/><rect x="161.900" y="240.39" width=".8" height=".7" fill="#888"/><rect x="161.900" y="248.3" width=".8" height=".7" fill="#888"/><rect x="161.900" y="256.22" width=".8" height=".7" fill="#888"/><rect x="161.900" y="264.13" width=".8" height=".7" fill="#888"/><rect x="161.900" y="272.05" width=".8" height=".7" fill="#888"/><rect x="161.900" y="279.96" width=".8" height=".7" fill="#888"/><rect x="161.900" y="287.88" width=".8" height=".7" fill="#888"/><rect x="161.900" y="295.79" width=".8" height=".7" fill="#888"/><rect x="161.900" y="303.71" width=".8" height=".7" fill="#888"/><rect x="161.900" y="311.62" width=".8" height=".7" fill="#888"/><rect x="161.900" y="319.54" width=".8" height=".7" fill="#888"/><rect x="161.900" y="327.45" width=".8" height=".7" fill="#888"/><rect x="161.900" y="335.37" width=".8" height=".7" fill="#888"/><rect x="161.900" y="343.28" width=".8" height=".7" fill="#888"/><rect x="161.900" y="351.2" width=".8" height=".7" fill="#888"/><rect x="161.900" y="359.11" width=".8" height=".7" fill="#888"/><rect x="161.900" y="367.03" width=".8" height=".7" fill="#888"/><rect x="161.900" y="374.94" width=".8" height=".7" fill="#888"/><rect x="161.900" y="382.86" width=".8" height=".7" fill="#888"/><rect x="161.900" y="390.77" width=".8" height=".7" fill="#888"/><rect x="161.900" y="398.69" width=".8" height=".7" fill="#888"/><rect x="161.900" y="406.6" width=".8" height=".7" fill="#888"/><rect x="161.900" y="414.52" width=".8" height=".7" fill="#888"/><rect x="161.900" y="422.43" width=".8" height=".7" fill="#888"/><rect x="161.900" y="430.35" width=".8" height=".7" fill="#888"/><rect x="161.900" y="438.26" width=".8" height=".7" fill="#888"/><rect x="161.900" y="446.18" width=".8" height=".7" fill="#888"/><rect x="161.900" y="454.09" width=".8" height=".7" fill="#888"/><rect x="161.900" y="462.01" width=".8" height=".7" fill="#888"/><rect x="161.900" y="469.92" width=".8" height=".7" fill="#888"/><rect x="161.900" y="477.84" width=".8" height=".7" fill="#888"/><rect x="161.900" y="485.75" width=".8" height=".7" fill="#888"/><rect x="161.900" y="493.67" width=".8" height=".7" fill="#888"/><rect x="161.900" y="501.58" width=".8" height=".7" fill="#888"/><rect x="161.900" y="509.5" width=".8" height=".7" fill="#888"/><rect x="161.900" y="517.41" width=".8" height=".7" fill="#888"/><rect x="161.900" y="525.33" width=".8" height=".7" fill="#888"/><rect x="161.900" y="533.24" width=".8" height=".7" fill="#888"/><rect x="161.900" y="541.16" width=".8" height=".7" fill="#888"/></svg>
<div class="a" style="left:180.2px;top:213px;width:592.3px;height:332.5px;background:#002060;"></div>
<svg style="left:383px;top:262px;" width="168" height="93" viewBox="0 0 168 93"><use href="#city" width="168" height="93"/></svg>
<svg style="left:245px;top:378.2px;" width="164" height="92" viewBox="0 0 164 92"><use href="#fuji" width="164" height="92"/></svg>
<svg style="left:541px;top:378px;" width="164" height="92" viewBox="0 0 164 92"><use href="#board" width="164" height="92"/></svg>
<svg style="left:0;top:0" width="1008" height="641" viewBox="0 0 1008 641"><rect x="245" y="378.200" width="164" height="92" fill="none" stroke="#b8b8b8" stroke-width=".8"/><path d="M326.700 362.500v13" stroke="#c0c0c0" stroke-width="1"/><circle cx="245" cy="378.2" r="3.300" fill="#fff" stroke="#9a9a9a" stroke-width=".8"/><circle cx="327" cy="378.2" r="3.300" fill="#fff" stroke="#9a9a9a" stroke-width=".8"/><circle cx="409" cy="378.2" r="3.300" fill="#fff" stroke="#9a9a9a" stroke-width=".8"/><circle cx="245" cy="424.2" r="3.300" fill="#fff" stroke="#9a9a9a" stroke-width=".8"/><circle cx="409" cy="424.2" r="3.300" fill="#fff" stroke="#9a9a9a" stroke-width=".8"/><circle cx="245" cy="470.2" r="3.300" fill="#fff" stroke="#9a9a9a" stroke-width=".8"/><circle cx="327" cy="470.2" r="3.300" fill="#fff" stroke="#9a9a9a" stroke-width=".8"/><circle cx="409" cy="470.2" r="3.300" fill="#fff" stroke="#9a9a9a" stroke-width=".8"/><path d="M331.400 355.450A4.600 4.600 0 1 0 329.500 360" fill="none" stroke="#9a9a9a" stroke-width="3.300"/><path d="M327.300 355.200l10.500-.5-5.200 6.300z" fill="#9a9a9a"/><path d="M331.400 355.450A4.600 4.600 0 1 0 329.500 360" fill="none" stroke="#f2f2f2" stroke-width="2.400"/><path d="M328.300 355.600l8.400-.3-4.100 4.900z" fill="#f2f2f2"/></svg>
<div class="a" style="left:780.2px;top:115.6px;width:9.8px;height:476px;background:#dcdcdc;"></div>
<div class="a" style="left:780.2px;top:115.6px;width:9.8px;height:9.7px;background:#fff;box-shadow:inset 0 0 0 .8px #c0c0c0"></div>
<svg style="left:783px;top:119.3px;" width="4.2" height="2.5" viewBox="0 0 4.2 2.5"><polygon points="0,2.500 4.200,2.500 2.100,0" fill="#666"/></svg>
<div class="a" style="left:780.5px;top:354.2px;width:9.3px;height:37.5px;background:#fff;box-shadow:inset 0 0 0 .8px #ababab"></div>
<div class="a" style="left:780.2px;top:582.5px;width:9.8px;height:9px;background:#fff;box-shadow:inset 0 0 0 .8px #c0c0c0"></div>
<svg style="left:783.0999999999999px;top:586.05px;" width="4.4" height="2.5" viewBox="0 0 4.4 2.5"><polygon points="0,0 4.4,0 2.2,2.5" fill="#666"/></svg>
<svg style="left:782.8px;top:595.5px;" width="5" height="5.5" viewBox="0 0 5 5.5"><polygon points="0,2.600 5,2.600 2.500,0" fill="#666"/><polygon points="0,5.400 5,5.400 2.500,2.800" fill="#666"/></svg>
<svg style="left:782.8px;top:607px;" width="5" height="5.5" viewBox="0 0 5 5.5"><polygon points="0,0 5,0 2.500,2.600" fill="#666"/><polygon points="0,2.800 5,2.800 2.500,5.400" fill="#666"/></svg>
<div class="a" style="left:791.2px;top:116px;width:1px;height:525px;background:#c8c8c8;"></div>
<div class="a" style="left:154px;top:629.2px;width:637.5px;height:0.9px;background:#c4c4c4;"></div>
<div class="t" style="left:161px;top:635.500px;font-size:9.700px;line-height:12px;height:12px;color:#444">单击此处添加备注</div>
<div class="t" style="left:800px;top:122.500px;font-size:14px;font-weight:300;line-height:18px;height:18px;color:#d04a27">设置图片格式</div>
<svg style="left:986.2px;top:127.7px;" width="4.6" height="2.6" viewBox="0 0 4.6 2.6"><polygon points="0,0 4.6,0 2.3,2.6" fill="#666"/></svg>
<svg style="left:996.5px;top:126px;" width="6" height="6" viewBox="0 0 6 6"><path d="M.5 .5l5 5M5.500 .5l-5 5" stroke="#555" stroke-width="1"/></svg>
<svg style="left:803.5px;top:142.5px;" width="17" height="16" viewBox="0 0 17 16"><path d="M6.800 2.800l6 6-5.800 6-6-6z" fill="#fff" stroke="#444" stroke-width="1"/><path d="M4.500 1c1.200-1 2.700-.6 3 1l.3 2.200" fill="none" stroke="#444" stroke-width=".9"/><path d="M11.500 6.200c2.200 1.300 4 3.600 3.600 6.200-.2 1.300-1.800 1.300-2-.1-.2-1.400-.3-2.500-1.200-3.700z" fill="#555"/><circle cx="7" cy="5.500" r=".8" fill="#444"/></svg>
<svg style="left:830.4px;top:143px;" width="16" height="16" viewBox="0 0 16 16"><path d="M4.500 12.500h7l1 3h-9z" fill="#cfcfcf"/><path d="M8 1l6.500 4.700-2.500 7.300H4L1.500 5.700z" fill="#fff" stroke="#444" stroke-width="1"/></svg>
<svg style="left:857.4px;top:143px;" width="15" height="16" viewBox="0 0 15 16"><path d="M1.200 3.500v11M0 3.500h2.400M0 14.500h2.400M4 1.300h10M4 0v2.600M14 0v2.600" stroke="#555" stroke-width=".9" fill="none"/><rect x="4" y="4.500" width="10" height="10" fill="#777"/><path d="M5.800 9.500h6.400M9 6.300v6.400" stroke="#fff" stroke-width=".9"/><path d="M5.300 9.500l1.400-1.200v2.400zM12.700 9.500l-1.400-1.200v2.400zM9 5.800l-1.200 1.400h2.400zM9 13.200l-1.200-1.400h2.400z" fill="#fff"/></svg>
<svg style="left:882.9px;top:143px;" width="15.7" height="15.7" viewBox="0 0 15.7 15.7"><rect x=".7" y=".7" width="14.300" height="14.300" fill="#fff" stroke="#d04a27" stroke-width="1.400"/><path d="M1.400 13.800l4.800-6 3.200 3.800 1.500-1.600 3.300 3.800z" fill="#d04a27"/><circle cx="11.300" cy="4.300" r="1.500" fill="#d04a27"/></svg>
<svg style="left:800px;top:163px;" width="204" height="8" viewBox="0 0 204 8"><path d="M0 7h86l4.400-4.600L94.800 7H204" fill="none" stroke="#cfcfcf" stroke-width=".9"/></svg>
<svg style="left:805.5px;top:176.8px;" width="5" height="5" viewBox="0 0 5 5"><polygon points="0,4.500 4.500,4.500 4.500,0" fill="#444"/></svg>
<div class="t" style="left:814.300px;top:175.1px;font-weight:bold;color:#d04a27">图片更正</div>
<div class="t" style="left:814.3px;top:190.4px;">锐化/柔化</div>
<div class="t" style="left:820.7px;top:208.8px;">预设(<u>P</u>)</div>
<div class="a" style="left:960px;top:205px;width:30px;height:17.6px;background:#fefefe;box-shadow:inset 0 0 0 .8px #c4c4c4"></div>
<svg style="left:966px;top:208.3px;" width="10.5" height="10.5" viewBox="0 0 10.5 10.5"><rect x=".3" y=".3" width="10.100" height="9.600" fill="#fff" stroke="#7a7a7a" stroke-width=".7"/><rect x=".9" y=".9" width="3.900" height="2.400" fill="#a9c9ee"/><path d="M.9 6.800V5.300l3.900-1.600v3.100z" fill="#86bda0"/><rect x=".9" y="6.800" width="3.900" height="2.500" fill="#8ab6ea"/><rect x="5.900" y=".9" width="3.900" height="2.400" fill="#4a86d0"/><path d="M5.900 6.800V5.300l3.900-1.800v3.300z" fill="#4fa27a"/><rect x="5.900" y="6.800" width="3.900" height="2.500" fill="#4a90e0"/><path d="M5.350 .3v9.600" stroke="#fff" stroke-width="1"/><path d="M5.350 .3v9.600" stroke="#d9b8a8" stroke-width=".5" stroke-dasharray=".8 .8"/></svg>
<svg style="left:981.1px;top:212.25px;" width="4.8" height="2.7" viewBox="0 0 4.8 2.7"><polygon points="0,0 4.8,0 2.4,2.7" fill="#555"/></svg>
<div class="t" style="left:820.7px;top:230.1px;">清晰度</div>
<div class="a" style="left:921px;top:227px;width:69px;height:17px;background:#fff;box-shadow:inset 0 0 0 .8px #c4c4c4"></div>
<div class="t" style="left:926.500px;top:230.1px;font-size:8.500px">18%</div>
<svg style="left:981.8px;top:231px;" width="4.4" height="9" viewBox="0 0 4.4 9"><polygon points="0,2.400 4.200,2.400 2.100,0" fill="#555"/><polygon points="0,6.600 4.200,6.600 2.100,9" fill="#555"/></svg>
<div class="a" style="left:862px;top:234.6px;width:55.5px;height:0.9px;background:#b9b9b9;"></div>
<div class="a" style="left:889.6px;top:234.2px;width:5.2999999999999545px;height:1.8px;background:#666;"></div>
<div class="a" style="left:894.3px;top:231.8px;width:1.2px;height:6.4px;background:#555;"></div>
<div class="t" style="left:814.3px;top:248.5px;">亮度/对比度</div>
<div class="t" style="left:820.7px;top:267.2px;">预设(<u>E</u>)</div>
<div class="a" style="left:960px;top:264px;width:30px;height:17.6px;background:#fefefe;box-shadow:inset 0 0 0 .8px #c4c4c4"></div>
<svg style="left:966px;top:267.3px;" width="10.5" height="10.5" viewBox="0 0 10.5 10.5"><g transform="translate(5.200 5.200)"><circle r="2.400" fill="#f2b95a"/><rect x="-.5" y="-5" width="1" height="1.700" fill="#f2b95a" transform="rotate(0)"/><rect x="-.5" y="-5" width="1" height="1.700" fill="#f2b95a" transform="rotate(45)"/><rect x="-.5" y="-5" width="1" height="1.700" fill="#f2b95a" transform="rotate(90)"/><rect x="-.5" y="-5" width="1" height="1.700" fill="#f2b95a" transform="rotate(135)"/><rect x="-.5" y="-5" width="1" height="1.700" fill="#f2b95a" transform="rotate(180)"/><rect x="-.5" y="-5" width="1" height="1.700" fill="#f2b95a" transform="rotate(225)"/><rect x="-.5" y="-5" width="1" height="1.700" fill="#f2b95a" transform="rotate(270)"/><rect x="-.5" y="-5" width="1" height="1.700" fill="#f2b95a" transform="rotate(315)"/></g></svg>
<svg style="left:981.1px;top:271.25px;" width="4.8" height="2.7" viewBox="0 0 4.8 2.7"><polygon points="0,0 4.8,0 2.4,2.7" fill="#555"/></svg>
<div class="t" style="left:820.7px;top:288.6px;">亮度(<u>B</u>)</div>
<div class="a" style="left:921px;top:285px;width:69px;height:17px;background:#fff;box-shadow:inset 0 0 0 .8px #c4c4c4"></div>
<div class="t" style="left:926.500px;top:288.1px;font-size:8.500px">0%</div>
<svg style="left:981.8px;top:289px;" width="4.4" height="9" viewBox="0 0 4.4 9"><polygon points="0,2.400 4.200,2.400 2.100,0" fill="#555"/><polygon points="0,6.600 4.200,6.600 2.100,9" fill="#555"/></svg>
<div class="a" style="left:862px;top:292.6px;width:55.5px;height:0.9px;background:#b9b9b9;"></div>
<div class="a" style="left:889.0px;top:289.8px;width:1.2px;height:6.4px;background:#555;"></div>
<div class="t" style="left:820.7px;top:309.5px;">对比度(<u>C</u>)</div>
<div class="a" style="left:921px;top:306px;width:69px;height:17px;background:#fff;box-shadow:inset 0 0 0 .8px #c4c4c4"></div>
<div class="t" style="left:926.500px;top:309.1px;font-size:8.500px">16%</div>
<svg style="left:981.8px;top:310px;" width="4.4" height="9" viewBox="0 0 4.4 9"><polygon points="0,2.400 4.200,2.400 2.100,0" fill="#555"/><polygon points="0,6.600 4.200,6.600 2.100,9" fill="#555"/></svg>
<div class="a" style="left:862px;top:313.6px;width:55.5px;height:0.9px;background:#b9b9b9;"></div>
<div class="a" style="left:889.6px;top:313.2px;width:4.899999999999977px;height:1.8px;background:#666;"></div>
<div class="a" style="left:893.9px;top:310.8px;width:1.2px;height:6.4px;background:#555;"></div>
<div class="a" style="left:814.7px;top:327px;width:38px;height:19.5px;background:#fdfdfd;box-shadow:inset 0 0 0 .8px #b9b9b9"></div>
<div class="t" style="left:820.7px;top:332.2px;"><u>重置(R)</u></div>
<svg style="left:805.5px;top:360.0px;" width="5" height="5" viewBox="0 0 5 5"><polygon points="0,4.500 4.500,4.500 4.500,0" fill="#444"/></svg>
<div class="t" style="left:814.300px;top:358.3px;font-weight:bold;color:#d04a27">图片颜色</div>
<div class="t" style="left:814.3px;top:373.3px;">颜色饱和度</div>
<div class="t" style="left:820.7px;top:392.0px;">预设(<u>P</u>)</div>
<div class="a" style="left:960px;top:388px;width:30px;height:17.6px;background:#fefefe;box-shadow:inset 0 0 0 .8px #c4c4c4"></div>
<svg style="left:966px;top:391.3px;" width="10.5" height="10.5" viewBox="0 0 10.5 10.5"><rect x=".3" y=".3" width="10.100" height="9.600" fill="#fff" stroke="#7a7a7a" stroke-width=".7"/><path d="M.9 6.600V5.200l3.900-1.800v3.200z" fill="#dcdcdc"/><rect x=".9" y="6.900" width="3.900" height="2.400" fill="#cfcfcf"/><rect x="1.600" y="1.600" width="1.400" height="1" fill="#bbb"/><rect x="5.900" y=".9" width="3.900" height="2.400" fill="#4a86d0"/><path d="M5.900 6.800V5.300l3.900-1.800v3.300z" fill="#4fa27a"/><rect x="5.900" y="6.800" width="3.900" height="2.500" fill="#2f69c8"/><path d="M5.350 .3v9.600" stroke="#fff" stroke-width="1"/><path d="M5.350 .3v9.600" stroke="#d9b8a8" stroke-width=".5" stroke-dasharray=".8 .8"/></svg>
<svg style="left:981.1px;top:395.25px;" width="4.8" height="2.7" viewBox="0 0 4.8 2.7"><polygon points="0,0 4.8,0 2.4,2.7" fill="#555"/></svg>
<div class="t" style="left:820.7px;top:413.3px;">饱和度(<u>S</u>)</div>
<div class="a" style="left:921px;top:409px;width:69px;height:17px;background:#fff;box-shadow:inset 0 0 0 .8px #c4c4c4"></div>
<div class="t" style="left:926.500px;top:412.1px;font-size:8.500px">181%</div>
<svg style="left:981.8px;top:413px;" width="4.4" height="9" viewBox="0 0 4.4 9"><polygon points="0,2.400 4.200,2.400 2.100,0" fill="#555"/><polygon points="0,6.600 4.200,6.600 2.100,9" fill="#555"/></svg>
<div class="a" style="left:862px;top:416.6px;width:55.5px;height:0.9px;background:#b9b9b9;"></div>
<div class="a" style="left:862px;top:416.2px;width:25.399999999999977px;height:1.8px;background:#777;"></div>
<div class="a" style="left:886.8px;top:413.8px;width:1.2px;height:6.4px;background:#555;"></div>
<div class="t" style="left:814.3px;top:431.3px;">色调</div>
<div class="t" style="left:820.7px;top:450.0px;">预设(<u>E</u>)</div>
<div class="a" style="left:960px;top:446px;width:30px;height:17.6px;background:#fefefe;box-shadow:inset 0 0 0 .8px #c4c4c4"></div>
<svg style="left:966px;top:449.3px;" width="10.5" height="10.5" viewBox="0 0 10.5 10.5"><rect x=".3" y=".3" width="10.100" height="9.600" fill="#fff" stroke="#7a7a7a" stroke-width=".7"/><rect x=".9" y=".9" width="3.900" height="2.400" fill="#e8622d"/><path d="M.9 6.800V5.300l3.900-1.800v3.300z" fill="#f0a860"/><rect x=".9" y="6.800" width="3.900" height="2.500" fill="#e8762d"/><rect x="5.900" y=".9" width="3.900" height="2.400" fill="#4a86d0"/><path d="M5.900 6.800V5.300l3.900-1.800v3.300z" fill="#4fa27a"/><rect x="5.900" y="6.800" width="3.900" height="2.500" fill="#2f69c8"/><path d="M5.350 .3v9.600" stroke="#fff" stroke-width="1"/><path d="M5.350 .3v9.600" stroke="#d9b8a8" stroke-width=".5" stroke-dasharray=".8 .8"/></svg>
<svg style="left:981.1px;top:453.25px;" width="4.8" height="2.7" viewBox="0 0 4.8 2.7"><polygon points="0,0 4.8,0 2.4,2.7" fill="#555"/></svg>
<div class="t" style="left:820.7px;top:471.0px;">色温(<u>M</u>)</div>
<div class="a" style="left:921px;top:467px;width:69px;height:17px;background:#fff;box-shadow:inset 0 0 0 .8px #c4c4c4"></div>
<div class="t" style="left:926.500px;top:470.1px;font-size:8.500px">6,500</div>
<svg style="left:981.8px;top:471px;" width="4.4" height="9" viewBox="0 0 4.4 9"><polygon points="0,2.400 4.200,2.400 2.100,0" fill="#555"/><polygon points="0,6.600 4.200,6.600 2.100,9" fill="#555"/></svg>
<div class="a" style="left:862px;top:474.6px;width:55.5px;height:0.9px;background:#b9b9b9;"></div>
<div class="a" style="left:862px;top:474.2px;width:27.600000000000023px;height:1.8px;background:#777;"></div>
<div class="a" style="left:889.0px;top:471.8px;width:1.2px;height:6.4px;background:#555;"></div>
<div class="t" style="left:814.3px;top:492.4px;">重新着色(<u>R</u>)</div>
<div class="a" style="left:960px;top:489px;width:30px;height:17.6px;background:#fefefe;box-shadow:inset 0 0 0 .8px #c4c4c4"></div>
<svg style="left:966px;top:492.3px;" width="10.5" height="10.5" viewBox="0 0 10.5 10.5"><rect x=".4" y=".4" width="9.600" height="9.600" fill="#9dbbe3" stroke="#6f97d0" stroke-width=".7"/><path d="M1 9l3.200-4 2.200 2.600 1-1 2 2.400z" fill="#3f6fb0"/><circle cx="7.300" cy="3" r="1" fill="#3f6fb0"/></svg>
<svg style="left:981.1px;top:496.25px;" width="4.8" height="2.7" viewBox="0 0 4.8 2.7"><polygon points="0,0 4.8,0 2.4,2.7" fill="#555"/></svg>
<div class="a" style="left:814.7px;top:510px;width:38px;height:19.7px;background:#fdfdfd;box-shadow:inset 0 0 0 .8px #b9b9b9"></div>
<div class="t" style="left:820.7px;top:515.1px;"><u>重置(R)</u></div>
<svg style="left:806px;top:542.2px;" width="4" height="6" viewBox="0 0 4 6"><polygon points=".4,.4 3.400,3 .4,5.600" fill="none" stroke="#666" stroke-width=".7"/></svg>
<div class="t" style="left:814.300px;top:541.0px;font-weight:bold;color:#444">裁剪</div>
<svg style="left:890.5px;top:427px;" width="8" height="12" viewBox="0 0 8 12"><path d="M.5 .5v9.500l2.300-2 1.600 3.600 1.300-.6-1.600-3.500h3z" fill="#fff" stroke="#222" stroke-width=".7"/></svg>
<svg style="left:0;top:0" width="1008" height="641" viewBox="0 0 1008 641"><polygon points="181.7,471.7 210.6,461.8 209.8,465.7 224,455 206.3,456.3 209.4,458.8 181.1,470.3" fill="#f01418"/><polygon points="744.0,204.7 791.2,190.6 790.3,194.5 805,184.6 787.3,185.0 790.3,187.6 743.6,203.3" fill="#f01418"/><polygon points="754.8,246.7 807.0,239.0 805.5,242.7 821.5,235 803.9,232.8 806.5,235.9 754.6,245.3" fill="#f01418"/><polygon points="757.4,326.7 801.1,321.6 799.5,325.3 815.7,318 798.2,315.4 800.7,318.4 757.2,325.3" fill="#f01418"/><polygon points="1002.5,439.6 994.8,413.9 998.7,414.7 988.5,400.2 989.2,417.9 991.7,414.9 1001.1,440.0" fill="#f01418"/></svg>
</div></body></html>
